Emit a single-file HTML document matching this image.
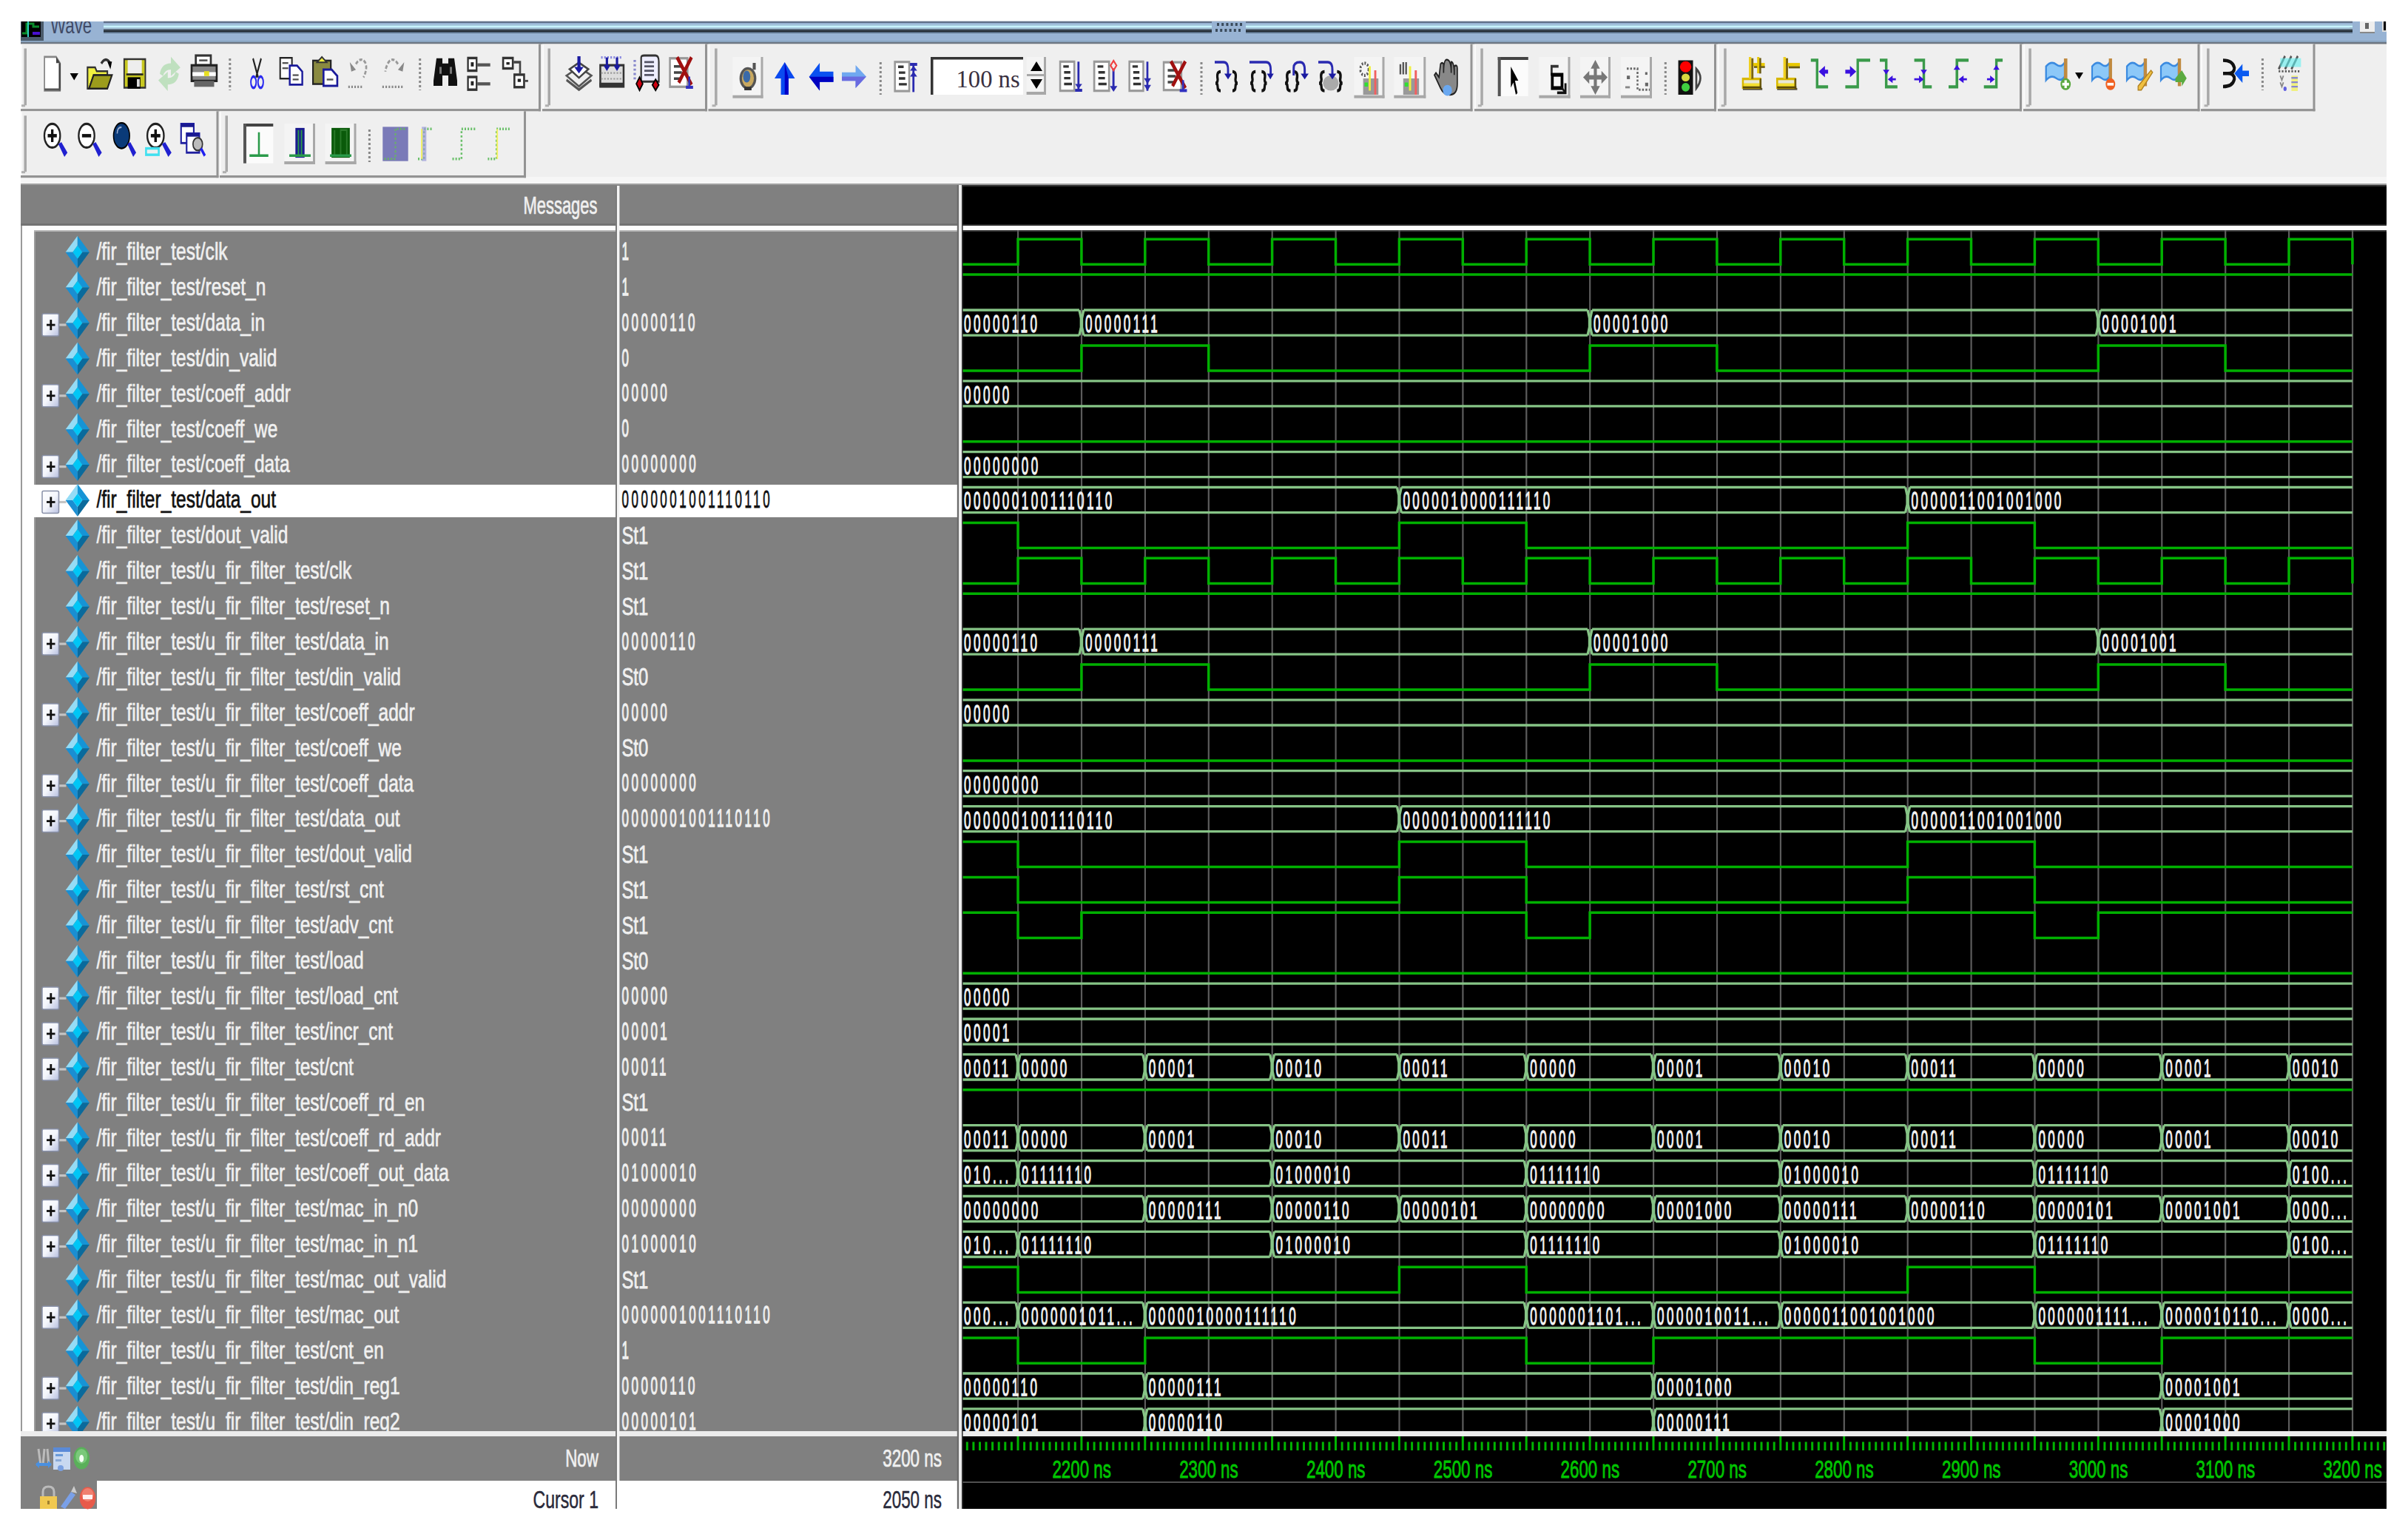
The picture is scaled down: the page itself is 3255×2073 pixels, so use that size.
<!DOCTYPE html><html><head><meta charset="utf-8"><style>
html,body{margin:0;padding:0;background:#fff;}
body{width:3255px;height:2073px;position:relative;overflow:hidden;font-family:"Liberation Sans",sans-serif;}
.a{position:absolute;}
</style></head><body>
<div class="a" style="left:28px;top:29px;width:3198px;height:28px;background:#98b3d3"></div>
<div class="a" style="left:28px;top:57px;width:3198px;height:2px;background:#6c7682"></div>
<div class="a" style="left:28px;top:59px;width:3198px;height:1px;background:#b4b4b4"></div>
<div class="a" style="left:28px;top:60px;width:3198px;height:189px;background:#efefef"></div>
<div class="a" style="left:28px;top:239px;width:3198px;height:8.5px;background:#f6f6f6"></div>
<div class="a" style="left:28px;top:247.5px;width:3198px;height:2.5px;background:#a0a0a0"></div>
<div class="a" style="left:28px;top:250px;width:807px;height:55px;background:#808080"></div>
<div class="a" style="left:28px;top:301.5px;width:807px;height:3px;background:#727272"></div>
<div class="a" style="left:835px;top:250px;width:463px;height:55px;background:#808080"></div>
<div class="a" style="left:835px;top:301.5px;width:463px;height:3px;background:#727272"></div>
<div class="a" style="left:1300px;top:250px;width:1926px;height:55px;background:#000"></div>
<div class="a" style="left:1300px;top:250px;width:1926px;height:2px;background:#333"></div>
<div class="a" style="left:1300px;top:303px;width:1926px;height:2px;background:#2a2a2a"></div>
<div class="a" style="left:28px;top:304.5px;width:3198px;height:6.5px;background:#fdfdfd"></div>
<div class="a" style="left:28px;top:305px;width:2px;height:1629px;background:#9a9a9a"></div>
<div class="a" style="left:30px;top:311px;width:16px;height:1623px;background:#fff"></div>
<div class="a" style="left:46px;top:312px;width:787px;height:1622px;background:#808080"></div>
<div class="a" style="left:46px;top:311px;width:2px;height:1623px;background:#9c9c9c"></div>
<div class="a" style="left:46px;top:311px;width:787px;height:2px;background:#b8b8b8"></div>
<div class="a" style="left:835px;top:311px;width:461px;height:1623px;background:#808080"></div>
<div class="a" style="left:835px;top:311px;width:461px;height:2px;background:#b8b8b8"></div>
<div class="a" style="left:1300px;top:311px;width:1926px;height:1623px;background:#000"></div>
<div class="a" style="left:1300px;top:311px;width:1926px;height:1.5px;background:#3a3a3a"></div>
<div class="a" style="left:28px;top:1934px;width:3198px;height:7px;background:#ececec"></div>
<div class="a" style="left:28px;top:1941px;width:1266px;height:60px;background:#808080"></div>
<div class="a" style="left:28px;top:2001px;width:103px;height:38px;background:#808080"></div>
<div class="a" style="left:131px;top:2001px;width:1163px;height:38px;background:#fff"></div>
<div class="a" style="left:1300px;top:1941px;width:1926px;height:98px;background:#000"></div>
<div class="a" style="left:1300px;top:2002px;width:1926px;height:2px;background:#505050"></div>
<div class="a" style="left:46px;top:655px;width:787px;height:44px;background:#fff"></div>
<div class="a" style="left:837px;top:655px;width:459px;height:44px;background:#fff"></div>
<svg class="a" style="left:0;top:0" width="3255" height="2073">
<defs><clipPath id="wc"><rect x="1300" y="311" width="1926" height="1623"/></clipPath><linearGradient id="pg" x1="0" y1="0" x2="1" y2="1"><stop offset="0" stop-color="#ffffff"/><stop offset="0.5" stop-color="#f4f6fc"/><stop offset="1" stop-color="#b8c0e0"/></linearGradient><clipPath id="tc"><rect x="1300" y="1941" width="1926" height="98"/></clipPath></defs>
<rect x="28" y="59.5" width="701.5" height="90.80000000000001" fill="#efefef"/><rect x="28" y="60.5" width="2" height="87.80000000000001" fill="#fafafa"/><rect x="728.0" y="59.5" width="3" height="90.80000000000001" fill="#939393"/><rect x="28" y="147.10000000000002" width="703.0" height="3.2" fill="#939393"/><rect x="32.5" y="65.5" width="3.5" height="76.80000000000001" fill="#a8a8a8"/><rect x="29" y="141.3" width="5" height="3" fill="#b0b0b0"/><rect x="733" y="59.5" width="221.5" height="90.80000000000001" fill="#efefef"/><rect x="733" y="60.5" width="2" height="87.80000000000001" fill="#fafafa"/><rect x="953.0" y="59.5" width="3" height="90.80000000000001" fill="#939393"/><rect x="733" y="147.10000000000002" width="223.0" height="3.2" fill="#939393"/><rect x="740.5" y="65.5" width="3.5" height="76.80000000000001" fill="#a8a8a8"/><rect x="737" y="141.3" width="5" height="3" fill="#b0b0b0"/><rect x="957.5" y="59.5" width="1031.5" height="90.80000000000001" fill="#efefef"/><rect x="957.5" y="60.5" width="2" height="87.80000000000001" fill="#fafafa"/><rect x="1987.5" y="59.5" width="3" height="90.80000000000001" fill="#939393"/><rect x="957.5" y="147.10000000000002" width="1033.0" height="3.2" fill="#939393"/><rect x="966.1" y="65.5" width="3.5" height="76.80000000000001" fill="#a8a8a8"/><rect x="962.6" y="141.3" width="5" height="3" fill="#b0b0b0"/><rect x="1993" y="59.5" width="325.5" height="90.80000000000001" fill="#efefef"/><rect x="1993" y="60.5" width="2" height="87.80000000000001" fill="#fafafa"/><rect x="2317.0" y="59.5" width="3" height="90.80000000000001" fill="#939393"/><rect x="1993" y="147.10000000000002" width="327.0" height="3.2" fill="#939393"/><rect x="2001.3" y="65.5" width="3.5" height="76.80000000000001" fill="#a8a8a8"/><rect x="1997.8" y="141.3" width="5" height="3" fill="#b0b0b0"/><rect x="2322" y="59.5" width="409.5" height="90.80000000000001" fill="#efefef"/><rect x="2322" y="60.5" width="2" height="87.80000000000001" fill="#fafafa"/><rect x="2730.0" y="59.5" width="3" height="90.80000000000001" fill="#939393"/><rect x="2322" y="147.10000000000002" width="411.0" height="3.2" fill="#939393"/><rect x="2330.2" y="65.5" width="3.5" height="76.80000000000001" fill="#a8a8a8"/><rect x="2326.7" y="141.3" width="5" height="3" fill="#b0b0b0"/><rect x="2735" y="59.5" width="237" height="90.80000000000001" fill="#efefef"/><rect x="2735" y="60.5" width="2" height="87.80000000000001" fill="#fafafa"/><rect x="2970.5" y="59.5" width="3" height="90.80000000000001" fill="#939393"/><rect x="2735" y="147.10000000000002" width="238.5" height="3.2" fill="#939393"/><rect x="2742.3" y="65.5" width="3.5" height="76.80000000000001" fill="#a8a8a8"/><rect x="2738.8" y="141.3" width="5" height="3" fill="#b0b0b0"/><rect x="2975" y="59.5" width="153" height="90.80000000000001" fill="#efefef"/><rect x="2975" y="60.5" width="2" height="87.80000000000001" fill="#fafafa"/><rect x="3126.5" y="59.5" width="3" height="90.80000000000001" fill="#939393"/><rect x="2975" y="147.10000000000002" width="154.5" height="3.2" fill="#939393"/><rect x="2983.1" y="65.5" width="3.5" height="76.80000000000001" fill="#a8a8a8"/><rect x="2979.6" y="141.3" width="5" height="3" fill="#b0b0b0"/><rect x="28" y="150.3" width="266" height="89.89999999999998" fill="#efefef"/><rect x="28" y="151.3" width="2" height="86.89999999999998" fill="#fafafa"/><rect x="292.5" y="150.3" width="3" height="89.89999999999998" fill="#939393"/><rect x="28" y="237.0" width="267.5" height="3.2" fill="#939393"/><rect x="32.5" y="156.3" width="3.5" height="75.89999999999998" fill="#a8a8a8"/><rect x="29" y="231.2" width="5" height="3" fill="#b0b0b0"/><rect x="297" y="150.3" width="412.5" height="89.89999999999998" fill="#efefef"/><rect x="297" y="151.3" width="2" height="86.89999999999998" fill="#fafafa"/><rect x="708.0" y="150.3" width="3" height="89.89999999999998" fill="#939393"/><rect x="297" y="237.0" width="414.0" height="3.2" fill="#939393"/><rect x="304.5" y="156.3" width="3.5" height="75.89999999999998" fill="#a8a8a8"/><rect x="301" y="231.2" width="5" height="3" fill="#b0b0b0"/>
<g transform="translate(56.6,76.8) scale(1.756,2.844)"><path d="M2,0 H11 L14,3 V16 H2 Z" fill="#fff" stroke="#888" stroke-width="1"/><path d="M11,0 L14,3 H11 Z" fill="#444"/><rect x="13" y="3" width="1.5" height="13" fill="#444"/><rect x="2" y="15" width="12.5" height="1" fill="#555"/></g><g transform="translate(94.6,99.0) scale(0.706,0.600)"><path d="M0,0 H16 L8,16 Z" fill="#000"/></g><g transform="translate(118.3,78.0) scale(2.063,2.612)"><path d="M0,5 H5 L6,7 H13 V9 H4 L1,16 H0 Z" fill="#f0f040" stroke="#333" stroke-width="1"/><path d="M1,16 L4,9 H16 L13,16 Z" fill="#9c9c1c" stroke="#222" stroke-width="1"/><path d="M9,3 Q12,-1 15,3" fill="none" stroke="#333" stroke-width="1.5"/><path d="M13,2 L16,2 L15,6 Z" fill="#000"/></g><g transform="translate(166.9,78.7) scale(1.906,2.569)"><rect x="0" y="0" width="16" height="16" fill="#333"/><rect x="1" y="1" width="14" height="14" fill="#c8c820"/><rect x="3" y="1" width="10" height="7" fill="#eee"/><rect x="2" y="8" width="12" height="1" fill="#222"/><rect x="3" y="10" width="9" height="6" fill="#000"/><rect x="9.5" y="11" width="2" height="4" fill="#ddd"/></g><g transform="translate(211.8,76.8) scale(2.137,2.881)"><path d="M2,8 Q3,3 9,3 V0 L15,5 L9,9 V6 Q5,6 4,9 Z" fill="#bfe0bf"/><path d="M14,8 Q13,13 7,13 V16 L1,11 L7,7 V10 Q11,10 12,7 Z" fill="#bfe0bf"/></g><g transform="translate(257.9,75.0) scale(2.256,2.644)"><rect x="3" y="0" width="9" height="5" fill="#fff" stroke="#333" stroke-width="1.2"/><rect x="5" y="2" width="5" height="1" fill="#555"/><rect x="0.5" y="5" width="15" height="8" fill="#888" stroke="#222" stroke-width="1.2"/><rect x="1" y="8.5" width="14" height="2" fill="#fff"/><rect x="8" y="8" width="3" height="2.5" fill="#e8e020"/><rect x="2" y="13" width="12" height="3" fill="#666"/></g><line x1="310.8" y1="79" x2="310.8" y2="122" stroke="#888" stroke-width="3" stroke-dasharray="3,3"/><g transform="translate(336.5,79.0) scale(1.375,2.562)"><path d="M4,0 L9,10 M12,0 L7,10" fill="none" stroke="#222" stroke-width="1.5"/><ellipse cx="4.5" cy="12.5" rx="2.6" ry="3" fill="none" stroke="#2a2af0" stroke-width="1.4"/><ellipse cx="11.5" cy="12.5" rx="2.6" ry="3" fill="none" stroke="#2a2af0" stroke-width="1.4"/></g><g transform="translate(377.7,77.0) scale(1.994,2.338)"><rect x="0.5" y="0.5" width="8" height="12" fill="#fff" stroke="#222" stroke-width="1"/><rect x="2" y="3" width="4" height="1" fill="#555"/><rect x="2" y="6" width="4" height="1" fill="#555"/><path d="M7,5 H12 L15.5,8.5 V16 H7 Z" fill="#fff" stroke="#1a1a9a" stroke-width="1.2"/><rect x="9" y="10" width="4" height="1" fill="#555"/><rect x="9" y="12.5" width="4" height="1" fill="#555"/></g><g transform="translate(422.0,77.0) scale(2.188,2.438)"><rect x="0.5" y="2" width="11" height="13" fill="#8a8a40" stroke="#222" stroke-width="1"/><path d="M3,3 L6,0 L9,3 Z" fill="#f0f040" stroke="#333" stroke-width="0.8"/><path d="M7,7 H12 L15.5,10.5 V16 H7 Z" fill="#fff" stroke="#1a1a9a" stroke-width="1.2"/><rect x="9" y="12" width="4" height="1" fill="#555"/></g><g transform="translate(470.8,78.8) scale(2.056,2.575)"><path d="M5,3 Q8,-1 11,2 Q13,5 10,10" fill="none" stroke="#999" stroke-width="1.3" stroke-dasharray="2,1"/><path d="M1,2 L5,6 L2,7 Z" fill="#888"/><path d="M0,15 H10" fill="none" stroke="#888" stroke-width="1.3" stroke-dasharray="1,1"/></g><g transform="translate(514.7,78.8) scale(2.112,2.575)"><path d="M11,3 Q8,-1 5,2 Q3,5 3,7" fill="none" stroke="#999" stroke-width="1.3" stroke-dasharray="2,1"/><path d="M15,2 L11,6 L14,7 Z" fill="#888"/><path d="M1,15 H15" fill="none" stroke="#888" stroke-width="1.3" stroke-dasharray="1,1"/></g><line x1="567.7" y1="79" x2="567.7" y2="122" stroke="#888" stroke-width="3" stroke-dasharray="3,3"/><g transform="translate(586.0,78.8) scale(2.000,2.325)"><path d="M2,0 H6 V3 H10 V0 H14 L16,13 V16 H10 V10 H6 V16 H0 V13 Z" fill="#111"/><rect x="4" y="5" width="1.5" height="4" fill="#777"/><rect x="11" y="5" width="1.5" height="4" fill="#777"/></g><g transform="translate(631.6,77.0) scale(1.944,2.850)"><rect x="0.5" y="0.5" width="6" height="6" fill="#fff" stroke="#333" stroke-width="1.2"/><rect x="2.5" y="2.5" width="2" height="2" fill="#222"/><rect x="7" y="3" width="9" height="1.5" fill="#555"/><rect x="0.5" y="9.5" width="6" height="6" fill="#fff" stroke="#333" stroke-width="1.2"/><rect x="2.5" y="11.5" width="2" height="2" fill="#222"/><rect x="7" y="12" width="9" height="1.5" fill="#555"/></g><g transform="translate(679.0,77.0) scale(2.181,2.812)"><rect x="0.5" y="0.5" width="6" height="5" fill="#fff" stroke="#333" stroke-width="1.2"/><rect x="2.5" y="2.5" width="2" height="1.2" fill="#222"/><path d="M7,2.5 H11 V8" fill="none" stroke="#444" stroke-width="1.2"/><rect x="7.5" y="8.5" width="6" height="6" fill="#fff" stroke="#333" stroke-width="1.2"/><rect x="9.5" y="10.5" width="2" height="1.5" fill="#222"/><rect x="14" y="11" width="2" height="1" fill="#444"/></g><g transform="translate(765.7,76.0) scale(2.112,2.912)"><path d="M0,9 L8,5 L16,9 L8,14 Z" fill="#eee" stroke="#555" stroke-width="1"/><path d="M0,11 L8,15.5 L16,11" fill="none" stroke="#555" stroke-width="1.2"/><path d="M2,6 L8,3 L14,6 L8,10 Z" fill="#fff" stroke="#444" stroke-width="1"/><rect x="7" y="0" width="2" height="6" fill="#1a1aa0"/><path d="M5,5 H11 L8,8 Z" fill="#1a1aa0"/></g><g transform="translate(810.4,75.0) scale(2.100,2.625)"><rect x="0.5" y="5" width="15" height="11" fill="#ddd" stroke="#333" stroke-width="1.2"/><path d="M1,9 H15 M1,12 H15" fill="none" stroke="#999" stroke-width="0.8" stroke-dasharray="1,1"/><path d="M1,1 H15" fill="none" stroke="#8888e0" stroke-width="1.2" stroke-dasharray="1,1"/><rect x="4" y="1" width="1.5" height="5" fill="#1a1aa0"/><path d="M2.5,5 H7 L4.75,8 Z" fill="#1a1aa0"/><rect x="10.5" y="1" width="1.5" height="5" fill="#1a1aa0"/><path d="M9,5 H13.5 L11.25,8 Z" fill="#1a1aa0"/><rect x="0" y="14" width="16" height="2" fill="#333"/></g><g transform="translate(858.0,75.0) scale(2.169,2.938)"><path d="M4,1 Q4,0 6,0 H13 Q15,0 15,3 V12 H4 Z" fill="#eef" stroke="#333" stroke-width="1"/><path d="M6,3 H12 M6,5 H12 M6,7 H12 M6,9 H12" fill="none" stroke="#556" stroke-width="0.9"/><path d="M0,2 V12" fill="none" stroke="#88c" stroke-width="1.5" stroke-dasharray="1,1"/><path d="M3,10 L5,13 L3,16 L1,13 Z" fill="#d00010" stroke="#000" stroke-width="0.8"/><path d="M13,11 L15,13.5 L13,16 L11,13.5 Z" fill="#d00010" stroke="#000" stroke-width="0.8"/></g><g transform="translate(904.5,76.0) scale(2.156,2.750)"><rect x="0.5" y="1" width="11" height="14" fill="#fff" stroke="#999" stroke-width="1.2"/><path d="M3,5 H8 M3,8 H8 M3,11 H8" fill="none" stroke="#444" stroke-width="1.3"/><path d="M5,0.5 L14,14 M14,0.5 L6,13" fill="none" stroke="#a01010" stroke-width="2"/><rect x="12" y="10" width="1.2" height="5" fill="#3030c0"/><rect x="10.5" y="14.5" width="4.5" height="1.5" fill="#3030c0"/></g><rect x="990.4" y="77" width="41.10000000000002" height="55.69999999999999" fill="#f4f4f4"/><rect x="1028.5" y="77" width="3" height="55.69999999999999" fill="#a8a8a8"/><rect x="990.4" y="128.7" width="41.10000000000002" height="4" fill="#a8a8a8"/><g transform="translate(998.0,85.0) scale(1.625,2.312)"><ellipse cx="8" cy="9" rx="7" ry="6.5" fill="#555"/><ellipse cx="8" cy="9" rx="5" ry="5" fill="#c8a860"/><ellipse cx="7" cy="8" rx="3" ry="3.5" fill="#3a6aa8"/><rect x="12" y="0" width="2.5" height="4" fill="#555"/><rect x="5" y="14" width="6" height="2" fill="#333"/></g><g transform="translate(1047.0,84.0) scale(1.719,2.750)"><path d="M8,0 L16,8 H11 V16 H5 V8 H0 Z" fill="#0a4af0"/><path d="M8,0 L11,8 V16 H8 Z" fill="#0000c8"/></g><g transform="translate(1093.7,85.0) scale(2.050,2.350)"><path d="M0,8 L7,0 V5 H16 V11 H7 V16 Z" fill="#0a50f0"/><path d="M0,8 H16 V11 H7 V16 Z" fill="#0000c0"/></g><g transform="translate(1138.0,88.0) scale(2.062,1.938)"><path d="M16,8 L9,0 V5 H0 V11 H9 V16 Z" fill="#70a8f0"/><path d="M16,8 H0 V11 H9 V16 Z" fill="#6a6ae0"/></g><line x1="1190.3" y1="84" x2="1190.3" y2="128" stroke="#888" stroke-width="3" stroke-dasharray="3,3"/><g transform="translate(1208.6,82.4) scale(2.150,2.625)"><rect x="0.5" y="0.5" width="9" height="15" fill="#fff" stroke="#999" stroke-width="1.2"/><path d="M2.5,3 H6 M3,6 H7 M3,9 H7 M3,12 H8" fill="none" stroke="#333" stroke-width="1.3"/><rect x="11.5" y="2" width="1.3" height="14" fill="#2a2ab0"/><rect x="10" y="1" width="4.5" height="1.5" fill="#2a2ab0"/><path d="M10,5 H14.5 L12.2,2.5 Z" fill="#2a2ab0"/><path d="M10,8 H14.5 L12.2,5.5 Z" fill="#2a2ab0"/></g><rect x="1258" y="77" width="125" height="51" fill="#fff"/><rect x="1258" y="77" width="125" height="3.5" fill="#333"/><rect x="1258" y="77" width="3.5" height="51" fill="#333"/><text transform="translate(1292.5,117.5) scale(0.96,1)" font-family="Liberation Serif" font-size="34" fill="#3a3040" >100 ns</text><rect x="1387.6" y="77" width="26.40000000000009" height="51" fill="#f4f4f4"/><rect x="1411" y="77" width="3" height="51" fill="#a8a8a8"/><rect x="1387.6" y="124" width="26.40000000000009" height="4" fill="#a8a8a8"/><path d="M1393,96 L1401,83 L1409,96 Z" fill="#000"/><path d="M1393,107 L1401,120 L1409,107 Z" fill="#000"/><rect x="1388" y="100" width="25" height="3" fill="#a8a8a8"/><g transform="translate(1432.0,82.0) scale(2.125,2.625)"><rect x="0.5" y="0.5" width="9" height="15" fill="#fff" stroke="#999" stroke-width="1.2"/><path d="M2.5,3 H6 M3,6 H7 M3,9 H7 M3,12 H8" fill="none" stroke="#333" stroke-width="1.3"/><rect x="11.5" y="0.5" width="1.3" height="15" fill="#2a2ab0"/><rect x="10" y="14.5" width="4.5" height="1.5" fill="#2a2ab0"/><path d="M10,12 H14.5 L12.2,14.5 Z" fill="#2a2ab0"/></g><g transform="translate(1478.0,82.0) scale(2.231,2.625)"><rect x="0.5" y="0.5" width="9" height="15" fill="#fff" stroke="#999" stroke-width="1.2"/><path d="M2.5,3 H6 M3,6 H7 M3,9 H7 M3,12 H8" fill="none" stroke="#333" stroke-width="1.3"/><rect x="11.5" y="4" width="1.3" height="11" fill="#2a2ab0"/><path d="M12.2,0 L14,2.5 L12.2,5 L10.4,2.5 Z" fill="none" stroke="#f04040" stroke-width="0.9"/><path d="M10,13 H14.5 L12.2,16 Z" fill="#2a2ab0"/></g><g transform="translate(1525.6,82.0) scale(2.088,2.625)"><rect x="0.5" y="0.5" width="9" height="15" fill="#fff" stroke="#999" stroke-width="1.2"/><path d="M2.5,3 H6 M3,6 H7 M3,9 H7 M3,12 H8" fill="none" stroke="#333" stroke-width="1.3"/><rect x="11.5" y="0.5" width="1.3" height="15" fill="#2a2ab0"/><path d="M10,9 H14.5 L12.2,12 Z" fill="#2a2ab0"/><path d="M10,12.5 H14.5 L12.2,15.5 Z" fill="#2a2ab0"/></g><g transform="translate(1572.0,81.5) scale(2.162,2.681)"><rect x="0.5" y="1" width="11" height="14" fill="#fff" stroke="#999" stroke-width="1.2"/><path d="M3,5 H8 M3,8 H8 M3,11 H8" fill="none" stroke="#444" stroke-width="1.3"/><path d="M5,0.5 L14,14 M14,0.5 L6,13" fill="none" stroke="#a01010" stroke-width="2"/><rect x="12" y="10" width="1.2" height="5" fill="#3030c0"/><rect x="10.5" y="14.5" width="4.5" height="1.5" fill="#3030c0"/></g><line x1="1624" y1="84" x2="1624" y2="128" stroke="#888" stroke-width="3" stroke-dasharray="3,3"/><g transform="translate(1642.0,81.5) scale(2.000,2.569)"><path d="M4,6 Q1,6 2,10 Q2,12 0.5,12 Q2,12 2,14 Q2,16 4,16" fill="none" stroke="#111" stroke-width="1.6"/><path d="M12,6 Q15,6 14,10 Q14,12 15.5,12 Q14,12 14,14 Q14,16 12,16" fill="none" stroke="#111" stroke-width="1.6"/><path d="M0,1 H6 Q9,1 9,5 V8" fill="none" stroke="#2a2ab0" stroke-width="1.4"/><path d="M6.5,7 H11.5 L9,10 Z" fill="#1a1aa0"/></g><g transform="translate(1689.0,81.5) scale(2.044,2.569)"><path d="M4,6 Q1,6 2,10 Q2,12 0.5,12 Q2,12 2,14 Q2,16 4,16" fill="none" stroke="#111" stroke-width="1.6"/><path d="M8,6 Q11,6 10,10 Q10,12 11.5,12 Q10,12 10,14 Q10,16 8,16" fill="none" stroke="#111" stroke-width="1.6"/><path d="M0,1 H11 Q14,1 14,5 V8" fill="none" stroke="#2a2ab0" stroke-width="1.4"/><path d="M11.5,7 H16 L13.8,10 Z" fill="#1a1aa0"/></g><g transform="translate(1736.0,81.5) scale(2.125,2.569)"><path d="M4,6 Q1,6 2,10 Q2,12 0.5,12 Q2,12 2,14 Q2,16 4,16" fill="none" stroke="#111" stroke-width="1.6"/><path d="M6,6 Q9,6 8,10 Q8,12 9.5,12 Q8,12 8,14 Q8,16 6,16" fill="none" stroke="#111" stroke-width="1.6"/><path d="M6,8 V4 Q6,1 10,1 Q13,1 13,5 V8" fill="none" stroke="#2a2ab0" stroke-width="1.4"/><path d="M10.5,7 H15.5 L13,10 Z" fill="#1a1aa0"/></g><g transform="translate(1782.0,81.5) scale(2.112,2.569)"><ellipse cx="8" cy="12" rx="5" ry="4" fill="#aaa"/><path d="M4,6 Q1,6 2,10 Q2,12 0.5,12 Q2,12 2,14 Q2,16 4,16" fill="none" stroke="#111" stroke-width="1.6"/><path d="M12,6 Q15,6 14,10 Q14,12 15.5,12 Q14,12 14,14 Q14,16 12,16" fill="none" stroke="#111" stroke-width="1.6"/><path d="M0,1 H6 Q9,1 9,5 V8" fill="none" stroke="#2a2ab0" stroke-width="1.4"/><path d="M6.5,7 H11.5 L9,10 Z" fill="#1a1aa0"/></g><rect x="1830.4" y="77" width="41.09999999999991" height="55.69999999999999" fill="#f4f4f4"/><rect x="1868.5" y="77" width="3" height="55.69999999999999" fill="#a8a8a8"/><rect x="1830.4" y="128.7" width="41.09999999999991" height="4" fill="#a8a8a8"/><g transform="translate(1837.0,84.0) scale(1.875,2.750)"><circle cx="4" cy="3.5" r="3" fill="none" stroke="#555" stroke-width="1.5" stroke-dasharray="1,1"/><rect x="3" y="8" width="11" height="8" fill="#999"/><rect x="7" y="2" width="1.5" height="12" fill="#f0f040"/><rect x="11" y="4" width="1.5" height="12" fill="#f06060"/><rect x="4" y="10" width="2.5" height="2" fill="#30e030"/></g><rect x="1884.3" y="77" width="43.0" height="55.69999999999999" fill="#f4f4f4"/><rect x="1924.3" y="77" width="3" height="55.69999999999999" fill="#a8a8a8"/><rect x="1884.3" y="128.7" width="43.0" height="4" fill="#a8a8a8"/><g transform="translate(1891.0,84.0) scale(1.938,2.750)"><path d="M1,1 V6 M3,0 V6 M5,0 V6" fill="none" stroke="#555" stroke-width="1.2"/><rect x="3" y="8" width="11" height="8" fill="#999"/><rect x="7" y="2" width="1.5" height="12" fill="#f0f040"/><rect x="11" y="4" width="1.5" height="12" fill="#f06060"/><rect x="4" y="10" width="2.5" height="2" fill="#30e030"/></g><g transform="translate(1939.0,80.6) scale(2.062,2.963)"><path d="M3,8 L1,6 L0,7 L4,13 Q6,16 10,16 Q15,16 15,11 V4 Q15,2 13,3 V7 Q13,1 11,1 V6 Q11,0 8,0 Q6,0 6,6 V2 Q5,1 4,2 Z" fill="#888" stroke="#222" stroke-width="0.8"/><ellipse cx="8.5" cy="14" rx="3" ry="2.5" fill="#6aa8f0"/></g><rect x="2024.7" y="77" width="41.100000000000136" height="53" fill="#fbfbfb"/><rect x="2024.7" y="77" width="41.100000000000136" height="4" fill="#444"/><rect x="2024.7" y="77" width="4" height="53" fill="#555"/><g transform="translate(2040.0,90.0) scale(1.125,2.375)"><path d="M2,0 L2,12 L5,9 L8,16 L10,15 L7,8 L11,8 Z" fill="#000"/></g><rect x="2080.4" y="77" width="42.09999999999991" height="55.69999999999999" fill="#f4f4f4"/><rect x="2119.5" y="77" width="3" height="55.69999999999999" fill="#a8a8a8"/><rect x="2080.4" y="128.7" width="42.09999999999991" height="4" fill="#a8a8a8"/><g transform="translate(2088.0,87.0) scale(1.875,2.562)"><path d="M5,6 V1 H10" fill="none" stroke="#333" stroke-width="1.5"/><rect x="5.5" y="5.5" width="7" height="7" fill="none" stroke="#000" stroke-width="2"/><path d="M9,15 H15 V10" fill="none" stroke="#111" stroke-width="1.5"/><path d="M12,12 L15,15" fill="none" stroke="#111" stroke-width="1.2"/></g><rect x="2136" y="77" width="41" height="55.69999999999999" fill="#f4f4f4"/><rect x="2174" y="77" width="3" height="55.69999999999999" fill="#a8a8a8"/><rect x="2136" y="128.7" width="41" height="4" fill="#a8a8a8"/><g transform="translate(2140.0,81.0) scale(2.062,2.938)"><path d="M8,0 L11,4 H9 V7 H12 V5 L16,8 L12,11 V9 H9 V12 H11 L8,16 L5,12 H7 V9 H4 V11 L0,8 L4,5 V7 H7 V4 H5 Z" fill="#777"/></g><rect x="2191" y="77" width="42" height="55.69999999999999" fill="#f4f4f4"/><rect x="2230" y="77" width="3" height="55.69999999999999" fill="#a8a8a8"/><rect x="2191" y="128.7" width="42" height="4" fill="#a8a8a8"/><g transform="translate(2197.0,88.0) scale(2.062,2.375)"><path d="M1,2 H8 V14 H16" fill="none" stroke="#666" stroke-width="1.2" stroke-dasharray="1.2,1"/><rect x="1" y="6" width="2" height="2" fill="#666"/><rect x="13" y="4" width="1.5" height="1.5" fill="#666"/><rect x="13" y="10" width="2" height="2" fill="#666"/><rect x="0" y="12" width="3" height="1.2" fill="#888"/></g><line x1="2251.3" y1="84" x2="2251.3" y2="128" stroke="#888" stroke-width="3" stroke-dasharray="3,3"/><g transform="translate(2268.6,81.5) scale(2.213,2.906)"><rect x="0" y="0" width="9" height="16" fill="#111"/><ellipse cx="4.5" cy="3" rx="3.5" ry="2.6" fill="#f00"/><ellipse cx="4.5" cy="8" rx="2.5" ry="1.8" fill="#d8d840"/><ellipse cx="4.5" cy="12.5" rx="2.5" ry="2" fill="#40d040"/><path d="M11,4 Q16,8 11,13 Z" fill="none" stroke="#444" stroke-width="1.2"/></g><g transform="translate(2354.7,77.0) scale(1.938,2.794)"><rect x="0.6" y="15" width="13.6" height="1" fill="#55503a"/><rect x="0" y="10" width="13.4" height="5.4" fill="#d8b800"/><rect x="1.3" y="11.2" width="10.8" height="1.6" fill="#e8e8d8"/><rect x="1.3" y="12.8" width="10.8" height="1.6" fill="#f4e030"/><rect x="12.4" y="10.4" width="1.2" height="5" fill="#6a5a10"/><rect x="0.6" y="14.2" width="13" height="1" fill="#5a4a08"/><rect x="4.8" y="0" width="1.7" height="10.5" fill="#f0d020"/><rect x="6.5" y="0.6" width="1.5" height="10" fill="#7a6510"/><rect x="7.9" y="2.9" width="8" height="1.6" fill="#e8c800"/><rect x="8.4" y="4.4" width="7.6" height="0.9" fill="#6a5a10"/><rect x="10.6" y="0" width="1.5" height="7.9" fill="#e8c800"/><rect x="12.1" y="0.5" width="1.3" height="7.5" fill="#6a5a10"/></g><g transform="translate(2401.0,77.0) scale(2.000,2.794)"><rect x="0.6" y="15" width="13.6" height="1" fill="#55503a"/><rect x="0" y="10" width="13.4" height="5.4" fill="#d8b800"/><rect x="1.3" y="11.2" width="10.8" height="1.6" fill="#e8e8d8"/><rect x="1.3" y="12.8" width="10.8" height="1.6" fill="#f4e030"/><rect x="12.4" y="10.4" width="1.2" height="5" fill="#6a5a10"/><rect x="0.6" y="14.2" width="13" height="1" fill="#5a4a08"/><rect x="4.8" y="0" width="1.7" height="10.5" fill="#f0d020"/><rect x="6.5" y="0.6" width="1.5" height="10" fill="#7a6510"/><rect x="7.9" y="2.9" width="8.1" height="1.7" fill="#e8c800"/><rect x="8.4" y="4.5" width="7.6" height="1" fill="#6a5a10"/></g><g transform="translate(2447.8,78.8) scale(2.119,2.575)"><path d="M0,1 H4 V15 H11" fill="none" stroke="#3a9a4a" stroke-width="1.6"/><path d="M5,7 L9,4 V6 H11 V8 H9 V10 Z" fill="#3a10e0"/></g><g transform="translate(2494.4,78.8) scale(2.100,2.575)"><path d="M0,15 H8 V1 H16" fill="none" stroke="#3a9a4a" stroke-width="1.6"/><path d="M7,7 L3,4 V6 H0 V8 H3 V10 Z" fill="#3a10e0"/></g><g transform="translate(2541.0,78.8) scale(2.169,2.575)"><path d="M0,1 H4 V15 H11" fill="none" stroke="#3a9a4a" stroke-width="1.6"/><path d="M2,6 H6 L4,8.5 Z" fill="#3a10e0"/><path d="M5,11 L8,9 V10.5 H10 V11.5 H8 V13 Z" fill="#3a10e0"/></g><g transform="translate(2587.6,78.8) scale(2.150,2.575)"><path d="M0,1 H6 V15 H11" fill="none" stroke="#3a9a4a" stroke-width="1.6"/><path d="M4,6 H8 L6,8.5 Z" fill="#3a10e0"/><path d="M6,11 L3,9 V10.5 H0 V11.5 H3 V13 Z" fill="#3a10e0"/></g><g transform="translate(2634.0,78.8) scale(2.250,2.575)"><path d="M0,15 H5 V1 H12" fill="none" stroke="#3a9a4a" stroke-width="1.6"/><path d="M3,6 H7 L5,3.5 Z" fill="#3a10e0"/><path d="M6,11 L9,9 V10.5 H11 V11.5 H9 V13 Z" fill="#3a10e0"/></g><g transform="translate(2681.7,78.8) scale(2.113,2.575)"><path d="M0,15 H8 V1 H12" fill="none" stroke="#3a9a4a" stroke-width="1.6"/><path d="M6,6 H10 L8,3.5 Z" fill="#3a10e0"/><path d="M7,11 L4,9 V10.5 H2 V11.5 H4 V13 Z" fill="#3a10e0"/></g><g transform="translate(2765.7,79.0) scale(2.306,2.675)"><path d="M0,4 Q3,1 6,3 Q9,5 11,2 V9 Q9,12 6,10 Q3,8 0,11 Z" fill="#8cc8f8" stroke="#3a8ae0" stroke-width="1"/><rect x="10.5" y="0" width="2" height="14" fill="#c08a40"/><ellipse cx="11.5" cy="13" rx="3" ry="3" fill="#5aa840"/><rect x="10.8" y="11" width="1.4" height="4" fill="#fff"/><rect x="9.5" y="12.3" width="4" height="1.4" fill="#fff"/></g><g transform="translate(2805.0,98.0) scale(0.688,0.562)"><path d="M0,0 H16 L8,16 Z" fill="#000"/></g><g transform="translate(2828.0,79.0) scale(2.156,2.675)"><path d="M0,4 Q3,1 6,3 Q9,5 11,2 V9 Q9,12 6,10 Q3,8 0,11 Z" fill="#8cc8f8" stroke="#3a8ae0" stroke-width="1"/><rect x="10.5" y="0" width="2" height="14" fill="#c08a40"/><ellipse cx="11.5" cy="13" rx="3" ry="3" fill="#f06020"/><rect x="9.5" y="12.3" width="4" height="1.4" fill="#fff"/></g><g transform="translate(2875.0,79.0) scale(2.169,2.675)"><path d="M0,4 Q3,1 6,3 Q9,5 11,2 V9 Q9,12 6,10 Q3,8 0,11 Z" fill="#8cc8f8" stroke="#3a8ae0" stroke-width="1"/><rect x="10.5" y="0" width="2" height="14" fill="#c08a40"/><path d="M15,6 L16,7 L9,16 L7,16 L7,14 Z" fill="#f0c040" stroke="#b08020" stroke-width="0.6"/></g><g transform="translate(2921.0,79.0) scale(2.175,2.675)"><path d="M0,4 Q3,1 6,3 Q9,5 11,2 V9 Q9,12 6,10 Q3,8 0,11 Z" fill="#8cc8f8" stroke="#3a8ae0" stroke-width="1"/><rect x="10.5" y="0" width="2" height="14" fill="#c08a40"/><path d="M9,10 L13,6 L16,10 L13,14 V12 H9 Z" fill="#5aaa40"/></g><g transform="translate(3005.0,79.0) scale(2.188,2.531)"><path d="M0,1 Q6,1 7,5 Q7,8 3,8 H0 M3,8 Q7,8 7,11 Q6,15 0,15" fill="none" stroke="#111" stroke-width="1.8"/><path d="M7,8 L12,3 V6.5 H16 V9.5 H12 V13 Z" fill="#0a5af0"/></g><line x1="3058.4" y1="79" x2="3058.4" y2="122" stroke="#888" stroke-width="3" stroke-dasharray="3,3"/><g transform="translate(3078.0,75.7) scale(2.156,2.956)"><path d="M1,6 L5,0 M5,6 L9,0 M9,6 L13,0" fill="none" stroke="#555" stroke-width="1.2"/><rect x="2" y="1" width="13" height="4" fill="#60f0f0" opacity="0.6"/><path d="M1,7 H15" fill="none" stroke="#555" stroke-width="1" stroke-dasharray="1,1"/><path d="M2,9 L3,11 L4,9 M2,12 L3,14 L4,12" fill="none" stroke="#888" stroke-width="0.8"/><rect x="9" y="9" width="4" height="7" fill="#f0f080"/><path d="M9,10 H13 M9,12 H13 M9,14 H13" fill="none" stroke="#8888d0" stroke-width="0.8"/><circle cx="5" cy="15" r="1" fill="#6060e0"/></g><g transform="translate(58.3,166.2) scale(2.056,2.863)"><ellipse cx="6" cy="6" rx="5.2" ry="5.6" fill="#fff" stroke="#222" stroke-width="1.1"/><path d="M10,10 L12,9 L16,14 L14,16 Z" fill="#2020d0"/><rect x="3" y="5.2" width="6" height="1.6" fill="#111"/><rect x="5.2" y="3" width="1.6" height="6" fill="#111"/></g><g transform="translate(104.7,166.2) scale(2.056,2.863)"><ellipse cx="6" cy="6" rx="5.2" ry="5.6" fill="#fff" stroke="#222" stroke-width="1.1"/><path d="M10,10 L12,9 L16,14 L14,16 Z" fill="#2020d0"/><rect x="3" y="5.2" width="6" height="1.6" fill="#111"/></g><g transform="translate(152.5,166.2) scale(1.969,2.863)"><ellipse cx="6" cy="6" rx="5.5" ry="6" fill="#0a3a78" stroke="#000" stroke-width="0.8"/><path d="M3,5 Q3,2 6,2" fill="none" stroke="#9ac" stroke-width="0.8"/><path d="M10,10 L12,9 L16,14 L14,16 Z" fill="#2020d0"/></g><g transform="translate(197.4,166.2) scale(2.150,2.863)"><ellipse cx="6" cy="6" rx="5.2" ry="5.6" fill="#fff" stroke="#222" stroke-width="1.1"/><path d="M10,10 L12,9 L16,14 L14,16 Z" fill="#2020d0"/><rect x="3" y="5.2" width="6" height="1.6" fill="#111"/><rect x="5.2" y="3" width="1.6" height="6" fill="#111"/><rect x="0" y="12" width="8" height="3" fill="none" stroke="#40e0f0" stroke-width="1.2"/></g><g transform="translate(243.7,166.0) scale(2.144,2.875)"><rect x="0.5" y="0.5" width="8" height="9" fill="#fff" stroke="#2020a0" stroke-width="1"/><rect x="0.5" y="0.5" width="8" height="1.5" fill="#1a1a90"/><rect x="4" y="5" width="8" height="9" fill="#fff" stroke="#2020a0" stroke-width="1"/><rect x="4" y="5" width="8" height="1.5" fill="#1a1a90"/><ellipse cx="11" cy="10" rx="3" ry="3" fill="#bbb" stroke="#333" stroke-width="0.8"/><path d="M13,12 L15.5,15.5" fill="none" stroke="#2020f0" stroke-width="1.5"/></g><rect x="329" y="167" width="40.30000000000001" height="53.69999999999999" fill="#fbfbfb"/><rect x="329" y="167" width="40.30000000000001" height="4" fill="#444"/><rect x="329" y="167" width="4" height="53.69999999999999" fill="#555"/><g transform="translate(333.0,170.0) scale(2.125,2.875)"><path d="M8,3 V14 M2,14 H14" fill="none" stroke="#2a9a4a" stroke-width="1.2"/></g><rect x="384.3" y="167" width="41.69999999999999" height="55" fill="#f4f4f4"/><rect x="423" y="167" width="3" height="55" fill="#a8a8a8"/><rect x="384.3" y="218" width="41.69999999999999" height="4" fill="#a8a8a8"/><g transform="translate(389.0,170.0) scale(2.062,2.875)"><rect x="5" y="1" width="6" height="14" fill="#1a1a90"/><path d="M7,2 V14 H9 V2" fill="none" stroke="#2a9a4a" stroke-width="0.9"/><path d="M1,14 H15" fill="none" stroke="#2a9a4a" stroke-width="1.2"/></g><rect x="439.6" y="167" width="41.89999999999998" height="55" fill="#f4f4f4"/><rect x="478.5" y="167" width="3" height="55" fill="#a8a8a8"/><rect x="439.6" y="218" width="41.89999999999998" height="4" fill="#a8a8a8"/><g transform="translate(444.0,170.0) scale(2.062,2.875)"><rect x="2" y="1" width="12" height="14" fill="#0a5a0a"/><path d="M4,2 V14 H8 V2 H12 V14" fill="none" stroke="#2a7a2a" stroke-width="0.9"/><path d="M1,14 H15" fill="none" stroke="#2a9a4a" stroke-width="1.2"/></g><line x1="499.4" y1="175" x2="499.4" y2="219" stroke="#888" stroke-width="3" stroke-dasharray="3,3"/><g transform="translate(517.3,171.4) scale(2.150,2.894)"><rect x="0" y="0" width="16" height="16" fill="#7a7ab8"/><path d="M1,15 H8 V1 H15" fill="none" stroke="#6ab06a" stroke-width="1" stroke-dasharray="1,1"/></g><g transform="translate(565.0,171.4) scale(2.062,2.894)"><path d="M0,15 H4 V1 H10" fill="none" stroke="#6ac06a" stroke-width="1.2" stroke-dasharray="1,1"/><rect x="2.5" y="0" width="3" height="16" fill="#9a9ad8" opacity="0.7"/><rect x="2" y="1" width="1" height="14" fill="#f0f060"/></g><g transform="translate(611.5,171.4) scale(2.056,2.894)"><path d="M0,15 H6 V1 H16" fill="none" stroke="#6ac06a" stroke-width="1.2" stroke-dasharray="1,1"/></g><g transform="translate(659.4,171.4) scale(1.962,2.894)"><path d="M0,15 H6 V1 H16" fill="none" stroke="#6ac06a" stroke-width="1.2" stroke-dasharray="1,1"/><rect x="6" y="1" width="1" height="14" fill="#f0f060"/></g>
<rect x="140" y="28.7" width="3040" height="2.3" fill="#607088"/><rect x="3176" y="33" width="4" height="12" fill="#3a4a5a"/>
<rect x="140" y="33" width="3040" height="2" fill="#a8cce0"/>
<rect x="140" y="35" width="3040" height="2.2" fill="#c8f4fc"/>
<rect x="140" y="37.2" width="3040" height="1.8" fill="#a8c8dc"/>
<rect x="140" y="39" width="3040" height="2" fill="#5a6a7a"/>
<rect x="140" y="41" width="3040" height="2" fill="#202830"/>
<rect x="140" y="43" width="3040" height="2" fill="#5a7088"/>
<rect x="1638" y="29" width="46" height="17" fill="#98b3d3"/>
<rect x="1645.0" y="31" width="3" height="4" fill="#3a4a5a"/><rect x="1643.0" y="39" width="3" height="4" fill="#3a4a5a"/>
<rect x="1651.2" y="31" width="3" height="4" fill="#3a4a5a"/><rect x="1649.2" y="39" width="3" height="4" fill="#3a4a5a"/>
<rect x="1657.4" y="31" width="3" height="4" fill="#3a4a5a"/><rect x="1655.4" y="39" width="3" height="4" fill="#3a4a5a"/>
<rect x="1663.6" y="31" width="3" height="4" fill="#3a4a5a"/><rect x="1661.6" y="39" width="3" height="4" fill="#3a4a5a"/>
<rect x="1669.8" y="31" width="3" height="4" fill="#3a4a5a"/><rect x="1667.8" y="39" width="3" height="4" fill="#3a4a5a"/>
<rect x="1676.0" y="31" width="3" height="4" fill="#3a4a5a"/><rect x="1674.0" y="39" width="3" height="4" fill="#3a4a5a"/>
<rect x="28" y="55" width="3198" height="2" fill="#8aa4c0"/>
<rect x="28" y="29" width="31" height="26" fill="#4a5a6a"/><rect x="29" y="29" width="26" height="21" fill="#000"/><path d="M30,45 H36 V32 H45 V36 H53" fill="none" stroke="#0a8a2a" stroke-width="3"/><rect x="37" y="29" width="2" height="21" fill="#30d0c0"/><rect x="44" y="43" width="10" height="4" fill="#4a10d0"/>
<clipPath id="tt"><rect x="60" y="29" width="80" height="17"/></clipPath>
<g clip-path="url(#tt)"><text transform="translate(68,45) scale(0.72,1)" font-family="Liberation Sans" font-size="31" fill="#404a66">Wave</text></g>
<rect x="3190" y="29" width="20" height="14" fill="#eee"/><rect x="3190" y="43" width="20" height="2" fill="#888"/><rect x="3197" y="31" width="5" height="8" fill="#666"/>
<rect x="3220" y="29" width="6" height="14" fill="#ddd"/><rect x="3222" y="29" width="3" height="12" fill="#000"/>
<text transform="translate(707.5,289) scale(0.665,1)" font-family="Liberation Sans" font-size="33" fill="#f0f0f0" stroke="#f0f0f0" stroke-width="0.7">Messages</text>
<text transform="translate(809,1982) scale(0.68,1)" text-anchor="end" font-family="Liberation Sans" font-size="33" fill="#f0f0f0" stroke="#f0f0f0" stroke-width="0.7">Now</text>
<text transform="translate(809,2038) scale(0.70,1)" text-anchor="end" font-family="Liberation Sans" font-size="33" fill="#2a2a3a" stroke="#2a2a3a" stroke-width="0.5">Cursor 1</text>
<text transform="translate(1273,1982) scale(0.68,1)" text-anchor="end" font-family="Liberation Sans" font-size="33" fill="#f0f0f0" stroke="#f0f0f0" stroke-width="0.7">3200 ns</text>
<text transform="translate(1273,2038) scale(0.68,1)" text-anchor="end" font-family="Liberation Sans" font-size="33" fill="#2a2a3a" stroke="#2a2a3a" stroke-width="0.5">2050 ns</text>
<path d="M52,1958 L55,1980 M60,1958 L58,1980 M64,1958 L66,1980" stroke="#bbb" stroke-width="3"/><rect x="49" y="1977" width="20" height="4" fill="#4a90e0"/><path d="M48,1979 L53,1974 V1984 Z M70,1979 L65,1974 V1984 Z" fill="#4a90e0"/>
<rect x="72" y="1956" width="23" height="30" fill="#c8d8f0"/><rect x="72" y="1956" width="23" height="6" fill="#5a8ad8"/><rect x="75" y="1965" width="10" height="3" fill="#6a9ad8"/><rect x="75" y="1972" width="8" height="3" fill="#8aaad8"/><ellipse cx="82" cy="1984" rx="4" ry="4" fill="#7aa0e0"/>
<ellipse cx="110.2" cy="1970.6" rx="10.8" ry="15" fill="#5ab05a"/><ellipse cx="110.2" cy="1968" rx="8" ry="10" fill="#7ac87a"/><ellipse cx="110.2" cy="1971" rx="3" ry="5" fill="#f4fff4"/>
<path d="M58,2024 V2016 Q58,2009 65.5,2009 Q73,2009 73,2016 V2024" fill="none" stroke="#bbb" stroke-width="3"/><rect x="54" y="2022" width="23" height="17" fill="#f0c850"/><rect x="64" y="2028" width="3" height="5" fill="#a08030"/>
<path d="M82,2036 L96,2016 L102,2020 L88,2039 Z" fill="#7aa0e8"/><path d="M96,2016 L100,2008 L104,2018 Z" fill="#ccc"/>
<ellipse cx="118.5" cy="2024.5" rx="10.8" ry="15" fill="#e85a4a"/><ellipse cx="118.5" cy="2020" rx="8" ry="9" fill="#f08070"/><rect x="112" y="2020" width="13" height="6" fill="#fff0f0"/>
<g clip-path="url(#wc)">
<rect x="1375.0" y="311" width="2.2" height="1623" fill="#5c5c5c"/>
<rect x="1460.9" y="311" width="2.2" height="1623" fill="#5c5c5c"/>
<rect x="1546.8" y="311" width="2.2" height="1623" fill="#5c5c5c"/>
<rect x="1632.7" y="311" width="2.2" height="1623" fill="#5c5c5c"/>
<rect x="1718.6" y="311" width="2.2" height="1623" fill="#5c5c5c"/>
<rect x="1804.5" y="311" width="2.2" height="1623" fill="#5c5c5c"/>
<rect x="1890.4" y="311" width="2.2" height="1623" fill="#5c5c5c"/>
<rect x="1976.3" y="311" width="2.2" height="1623" fill="#5c5c5c"/>
<rect x="2062.2" y="311" width="2.2" height="1623" fill="#5c5c5c"/>
<rect x="2148.1" y="311" width="2.2" height="1623" fill="#5c5c5c"/>
<rect x="2234.0" y="311" width="2.2" height="1623" fill="#5c5c5c"/>
<rect x="2319.9" y="311" width="2.2" height="1623" fill="#5c5c5c"/>
<rect x="2405.8" y="311" width="2.2" height="1623" fill="#5c5c5c"/>
<rect x="2491.7" y="311" width="2.2" height="1623" fill="#5c5c5c"/>
<rect x="2577.6" y="311" width="2.2" height="1623" fill="#5c5c5c"/>
<rect x="2663.5" y="311" width="2.2" height="1623" fill="#5c5c5c"/>
<rect x="2749.4" y="311" width="2.2" height="1623" fill="#5c5c5c"/>
<rect x="2835.3" y="311" width="2.2" height="1623" fill="#5c5c5c"/>
<rect x="2921.2" y="311" width="2.2" height="1623" fill="#5c5c5c"/>
<rect x="3007.1" y="311" width="2.2" height="1623" fill="#5c5c5c"/>
<rect x="3093.0" y="311" width="2.2" height="1623" fill="#5c5c5c"/>
<rect x="3178.9" y="311" width="2.2" height="1623" fill="#5c5c5c"/>
<path d="M1300.0,357.3 H1376.0 V323.2 H1461.9 V357.3 H1547.8 V323.2 H1633.7 V357.3 H1719.6 V323.2 H1805.5 V357.3 H1891.4 V323.2 H1977.3 V357.3 H2063.2 V323.2 H2149.1 V357.3 H2235.0 V323.2 H2320.9 V357.3 H2406.8 V323.2 H2492.7 V357.3 H2578.6 V323.2 H2664.5 V357.3 H2750.4 V323.2 H2836.3 V357.3 H2922.2 V323.2 H3008.1 V357.3 H3094.0 V323.2 H3179.9 V357.3 M1300.0,371.1 H3179.9 M1300.0,501.0 H1461.9 V466.9 H1633.7 V501.0 H2149.1 V466.9 H2320.9 V501.0 H2836.3 V466.9 H3008.1 V501.0 H3179.9 M1300.0,596.8 H3179.9 M1300.0,706.4 H1376.0 V740.5 H1891.4 V706.4 H2063.2 V740.5 H2578.6 V706.4 H2750.4 V740.5 H3179.9 M1300.0,788.4 H1376.0 V754.3 H1461.9 V788.4 H1547.8 V754.3 H1633.7 V788.4 H1719.6 V754.3 H1805.5 V788.4 H1891.4 V754.3 H1977.3 V788.4 H2063.2 V754.3 H2149.1 V788.4 H2235.0 V754.3 H2320.9 V788.4 H2406.8 V754.3 H2492.7 V788.4 H2578.6 V754.3 H2664.5 V788.4 H2750.4 V754.3 H2836.3 V788.4 H2922.2 V754.3 H3008.1 V788.4 H3094.0 V754.3 H3179.9 V788.4 M1300.0,802.2 H3179.9 M1300.0,932.1 H1461.9 V898.0 H1633.7 V932.1 H2149.1 V898.0 H2320.9 V932.1 H2836.3 V898.0 H3008.1 V932.1 H3179.9 M1300.0,1027.9 H3179.9 M1300.0,1137.5 H1376.0 V1171.6 H1891.4 V1137.5 H2063.2 V1171.6 H2578.6 V1137.5 H2750.4 V1171.6 H3179.9 M1300.0,1185.4 H1376.0 V1219.5 H1891.4 V1185.4 H2063.2 V1219.5 H2578.6 V1185.4 H2750.4 V1219.5 H3179.9 M1300.0,1233.3 H1376.0 V1267.4 H1461.9 V1233.3 H2063.2 V1267.4 H2149.1 V1233.3 H2750.4 V1267.4 H2836.3 V1233.3 H3179.9 M1300.0,1315.3 H3179.9 M1300.0,1472.8 H3179.9 M1300.0,1712.3 H1376.0 V1746.4 H1891.4 V1712.3 H2063.2 V1746.4 H2578.6 V1712.3 H2750.4 V1746.4 H3179.9 M1300.0,1808.1 H1376.0 V1842.2 H1547.8 V1808.1 H2063.2 V1842.2 H2235.0 V1808.1 H2750.4 V1842.2 H2922.2 V1808.1 H3179.9" fill="none" stroke="#00b000" stroke-width="3.5"/>
<path d="M1300.0,419.0 H1458.9 M1300.0,453.1 H1458.9 M1464.9,419.0 H2146.1 M1464.9,453.1 H2146.1 M1458.9,419.0 L1461.3,430.1 V442.1 L1458.9,453.1 M1464.9,419.0 L1462.5,430.1 V442.1 L1464.9,453.1 M2152.1,419.0 H2833.3 M2152.1,453.1 H2833.3 M2146.1,419.0 L2148.5,430.1 V442.1 L2146.1,453.1 M2152.1,419.0 L2149.7,430.1 V442.1 L2152.1,453.1 M2839.3,419.0 H3179.9 M2839.3,453.1 H3179.9 M2833.3,419.0 L2835.7,430.1 V442.1 L2833.3,453.1 M2839.3,419.0 L2836.9,430.1 V442.1 L2839.3,453.1 M1300.0,514.8 H3179.9 M1300.0,548.9 H3179.9 M1300.0,610.6 H3179.9 M1300.0,644.7 H3179.9 M1300.0,658.5 H1888.4 M1300.0,692.6 H1888.4 M1894.4,658.5 H2575.6 M1894.4,692.6 H2575.6 M1888.4,658.5 L1890.8,669.5 V681.5 L1888.4,692.6 M1894.4,658.5 L1892.0,669.5 V681.5 L1894.4,692.6 M2581.6,658.5 H3179.9 M2581.6,692.6 H3179.9 M2575.6,658.5 L2578.0,669.5 V681.5 L2575.6,692.6 M2581.6,658.5 L2579.2,669.5 V681.5 L2581.6,692.6 M1300.0,850.1 H1458.9 M1300.0,884.2 H1458.9 M1464.9,850.1 H2146.1 M1464.9,884.2 H2146.1 M1458.9,850.1 L1461.3,861.1 V873.1 L1458.9,884.2 M1464.9,850.1 L1462.5,861.1 V873.1 L1464.9,884.2 M2152.1,850.1 H2833.3 M2152.1,884.2 H2833.3 M2146.1,850.1 L2148.5,861.1 V873.1 L2146.1,884.2 M2152.1,850.1 L2149.7,861.1 V873.1 L2152.1,884.2 M2839.3,850.1 H3179.9 M2839.3,884.2 H3179.9 M2833.3,850.1 L2835.7,861.1 V873.1 L2833.3,884.2 M2839.3,850.1 L2836.9,861.1 V873.1 L2839.3,884.2 M1300.0,945.9 H3179.9 M1300.0,980.0 H3179.9 M1300.0,1041.7 H3179.9 M1300.0,1075.8 H3179.9 M1300.0,1089.6 H1888.4 M1300.0,1123.7 H1888.4 M1894.4,1089.6 H2575.6 M1894.4,1123.7 H2575.6 M1888.4,1089.6 L1890.8,1100.7 V1112.7 L1888.4,1123.7 M1894.4,1089.6 L1892.0,1100.7 V1112.7 L1894.4,1123.7 M2581.6,1089.6 H3179.9 M2581.6,1123.7 H3179.9 M2575.6,1089.6 L2578.0,1100.7 V1112.7 L2575.6,1123.7 M2581.6,1089.6 L2579.2,1100.7 V1112.7 L2581.6,1123.7 M1300.0,1329.1 H3179.9 M1300.0,1363.2 H3179.9 M1300.0,1377.0 H3179.9 M1300.0,1411.1 H3179.9 M1300.0,1424.9 H1373.0 M1300.0,1459.0 H1373.0 M1379.0,1424.9 H1544.8 M1379.0,1459.0 H1544.8 M1373.0,1424.9 L1375.4,1436.0 V1448.0 L1373.0,1459.0 M1379.0,1424.9 L1376.6,1436.0 V1448.0 L1379.0,1459.0 M1550.8,1424.9 H1716.6 M1550.8,1459.0 H1716.6 M1544.8,1424.9 L1547.2,1436.0 V1448.0 L1544.8,1459.0 M1550.8,1424.9 L1548.4,1436.0 V1448.0 L1550.8,1459.0 M1722.6,1424.9 H1888.4 M1722.6,1459.0 H1888.4 M1716.6,1424.9 L1719.0,1436.0 V1448.0 L1716.6,1459.0 M1722.6,1424.9 L1720.2,1436.0 V1448.0 L1722.6,1459.0 M1894.4,1424.9 H2060.2 M1894.4,1459.0 H2060.2 M1888.4,1424.9 L1890.8,1436.0 V1448.0 L1888.4,1459.0 M1894.4,1424.9 L1892.0,1436.0 V1448.0 L1894.4,1459.0 M2066.2,1424.9 H2232.0 M2066.2,1459.0 H2232.0 M2060.2,1424.9 L2062.6,1436.0 V1448.0 L2060.2,1459.0 M2066.2,1424.9 L2063.8,1436.0 V1448.0 L2066.2,1459.0 M2238.0,1424.9 H2403.8 M2238.0,1459.0 H2403.8 M2232.0,1424.9 L2234.4,1436.0 V1448.0 L2232.0,1459.0 M2238.0,1424.9 L2235.6,1436.0 V1448.0 L2238.0,1459.0 M2409.8,1424.9 H2575.6 M2409.8,1459.0 H2575.6 M2403.8,1424.9 L2406.2,1436.0 V1448.0 L2403.8,1459.0 M2409.8,1424.9 L2407.4,1436.0 V1448.0 L2409.8,1459.0 M2581.6,1424.9 H2747.4 M2581.6,1459.0 H2747.4 M2575.6,1424.9 L2578.0,1436.0 V1448.0 L2575.6,1459.0 M2581.6,1424.9 L2579.2,1436.0 V1448.0 L2581.6,1459.0 M2753.4,1424.9 H2919.2 M2753.4,1459.0 H2919.2 M2747.4,1424.9 L2749.8,1436.0 V1448.0 L2747.4,1459.0 M2753.4,1424.9 L2751.0,1436.0 V1448.0 L2753.4,1459.0 M2925.2,1424.9 H3091.0 M2925.2,1459.0 H3091.0 M2919.2,1424.9 L2921.6,1436.0 V1448.0 L2919.2,1459.0 M2925.2,1424.9 L2922.8,1436.0 V1448.0 L2925.2,1459.0 M3097.0,1424.9 H3179.9 M3097.0,1459.0 H3179.9 M3091.0,1424.9 L3093.4,1436.0 V1448.0 L3091.0,1459.0 M3097.0,1424.9 L3094.6,1436.0 V1448.0 L3097.0,1459.0 M1300.0,1520.7 H1373.0 M1300.0,1554.8 H1373.0 M1379.0,1520.7 H1544.8 M1379.0,1554.8 H1544.8 M1373.0,1520.7 L1375.4,1531.8 V1543.8 L1373.0,1554.8 M1379.0,1520.7 L1376.6,1531.8 V1543.8 L1379.0,1554.8 M1550.8,1520.7 H1716.6 M1550.8,1554.8 H1716.6 M1544.8,1520.7 L1547.2,1531.8 V1543.8 L1544.8,1554.8 M1550.8,1520.7 L1548.4,1531.8 V1543.8 L1550.8,1554.8 M1722.6,1520.7 H1888.4 M1722.6,1554.8 H1888.4 M1716.6,1520.7 L1719.0,1531.8 V1543.8 L1716.6,1554.8 M1722.6,1520.7 L1720.2,1531.8 V1543.8 L1722.6,1554.8 M1894.4,1520.7 H2060.2 M1894.4,1554.8 H2060.2 M1888.4,1520.7 L1890.8,1531.8 V1543.8 L1888.4,1554.8 M1894.4,1520.7 L1892.0,1531.8 V1543.8 L1894.4,1554.8 M2066.2,1520.7 H2232.0 M2066.2,1554.8 H2232.0 M2060.2,1520.7 L2062.6,1531.8 V1543.8 L2060.2,1554.8 M2066.2,1520.7 L2063.8,1531.8 V1543.8 L2066.2,1554.8 M2238.0,1520.7 H2403.8 M2238.0,1554.8 H2403.8 M2232.0,1520.7 L2234.4,1531.8 V1543.8 L2232.0,1554.8 M2238.0,1520.7 L2235.6,1531.8 V1543.8 L2238.0,1554.8 M2409.8,1520.7 H2575.6 M2409.8,1554.8 H2575.6 M2403.8,1520.7 L2406.2,1531.8 V1543.8 L2403.8,1554.8 M2409.8,1520.7 L2407.4,1531.8 V1543.8 L2409.8,1554.8 M2581.6,1520.7 H2747.4 M2581.6,1554.8 H2747.4 M2575.6,1520.7 L2578.0,1531.8 V1543.8 L2575.6,1554.8 M2581.6,1520.7 L2579.2,1531.8 V1543.8 L2581.6,1554.8 M2753.4,1520.7 H2919.2 M2753.4,1554.8 H2919.2 M2747.4,1520.7 L2749.8,1531.8 V1543.8 L2747.4,1554.8 M2753.4,1520.7 L2751.0,1531.8 V1543.8 L2753.4,1554.8 M2925.2,1520.7 H3091.0 M2925.2,1554.8 H3091.0 M2919.2,1520.7 L2921.6,1531.8 V1543.8 L2919.2,1554.8 M2925.2,1520.7 L2922.8,1531.8 V1543.8 L2925.2,1554.8 M3097.0,1520.7 H3179.9 M3097.0,1554.8 H3179.9 M3091.0,1520.7 L3093.4,1531.8 V1543.8 L3091.0,1554.8 M3097.0,1520.7 L3094.6,1531.8 V1543.8 L3097.0,1554.8 M1300.0,1568.6 H1373.0 M1300.0,1602.7 H1373.0 M1379.0,1568.6 H1716.6 M1379.0,1602.7 H1716.6 M1373.0,1568.6 L1375.4,1579.6 V1591.6 L1373.0,1602.7 M1379.0,1568.6 L1376.6,1579.6 V1591.6 L1379.0,1602.7 M1722.6,1568.6 H2060.2 M1722.6,1602.7 H2060.2 M1716.6,1568.6 L1719.0,1579.6 V1591.6 L1716.6,1602.7 M1722.6,1568.6 L1720.2,1579.6 V1591.6 L1722.6,1602.7 M2066.2,1568.6 H2403.8 M2066.2,1602.7 H2403.8 M2060.2,1568.6 L2062.6,1579.6 V1591.6 L2060.2,1602.7 M2066.2,1568.6 L2063.8,1579.6 V1591.6 L2066.2,1602.7 M2409.8,1568.6 H2747.4 M2409.8,1602.7 H2747.4 M2403.8,1568.6 L2406.2,1579.6 V1591.6 L2403.8,1602.7 M2409.8,1568.6 L2407.4,1579.6 V1591.6 L2409.8,1602.7 M2753.4,1568.6 H3091.0 M2753.4,1602.7 H3091.0 M2747.4,1568.6 L2749.8,1579.6 V1591.6 L2747.4,1602.7 M2753.4,1568.6 L2751.0,1579.6 V1591.6 L2753.4,1602.7 M3097.0,1568.6 H3179.9 M3097.0,1602.7 H3179.9 M3091.0,1568.6 L3093.4,1579.6 V1591.6 L3091.0,1602.7 M3097.0,1568.6 L3094.6,1579.6 V1591.6 L3097.0,1602.7 M1300.0,1616.5 H1544.8 M1300.0,1650.6 H1544.8 M1550.8,1616.5 H1716.6 M1550.8,1650.6 H1716.6 M1544.8,1616.5 L1547.2,1627.5 V1639.5 L1544.8,1650.6 M1550.8,1616.5 L1548.4,1627.5 V1639.5 L1550.8,1650.6 M1722.6,1616.5 H1888.4 M1722.6,1650.6 H1888.4 M1716.6,1616.5 L1719.0,1627.5 V1639.5 L1716.6,1650.6 M1722.6,1616.5 L1720.2,1627.5 V1639.5 L1722.6,1650.6 M1894.4,1616.5 H2060.2 M1894.4,1650.6 H2060.2 M1888.4,1616.5 L1890.8,1627.5 V1639.5 L1888.4,1650.6 M1894.4,1616.5 L1892.0,1627.5 V1639.5 L1894.4,1650.6 M2066.2,1616.5 H2232.0 M2066.2,1650.6 H2232.0 M2060.2,1616.5 L2062.6,1627.5 V1639.5 L2060.2,1650.6 M2066.2,1616.5 L2063.8,1627.5 V1639.5 L2066.2,1650.6 M2238.0,1616.5 H2403.8 M2238.0,1650.6 H2403.8 M2232.0,1616.5 L2234.4,1627.5 V1639.5 L2232.0,1650.6 M2238.0,1616.5 L2235.6,1627.5 V1639.5 L2238.0,1650.6 M2409.8,1616.5 H2575.6 M2409.8,1650.6 H2575.6 M2403.8,1616.5 L2406.2,1627.5 V1639.5 L2403.8,1650.6 M2409.8,1616.5 L2407.4,1627.5 V1639.5 L2409.8,1650.6 M2581.6,1616.5 H2747.4 M2581.6,1650.6 H2747.4 M2575.6,1616.5 L2578.0,1627.5 V1639.5 L2575.6,1650.6 M2581.6,1616.5 L2579.2,1627.5 V1639.5 L2581.6,1650.6 M2753.4,1616.5 H2919.2 M2753.4,1650.6 H2919.2 M2747.4,1616.5 L2749.8,1627.5 V1639.5 L2747.4,1650.6 M2753.4,1616.5 L2751.0,1627.5 V1639.5 L2753.4,1650.6 M2925.2,1616.5 H3091.0 M2925.2,1650.6 H3091.0 M2919.2,1616.5 L2921.6,1627.5 V1639.5 L2919.2,1650.6 M2925.2,1616.5 L2922.8,1627.5 V1639.5 L2925.2,1650.6 M3097.0,1616.5 H3179.9 M3097.0,1650.6 H3179.9 M3091.0,1616.5 L3093.4,1627.5 V1639.5 L3091.0,1650.6 M3097.0,1616.5 L3094.6,1627.5 V1639.5 L3097.0,1650.6 M1300.0,1664.4 H1373.0 M1300.0,1698.5 H1373.0 M1379.0,1664.4 H1716.6 M1379.0,1698.5 H1716.6 M1373.0,1664.4 L1375.4,1675.5 V1687.5 L1373.0,1698.5 M1379.0,1664.4 L1376.6,1675.5 V1687.5 L1379.0,1698.5 M1722.6,1664.4 H2060.2 M1722.6,1698.5 H2060.2 M1716.6,1664.4 L1719.0,1675.5 V1687.5 L1716.6,1698.5 M1722.6,1664.4 L1720.2,1675.5 V1687.5 L1722.6,1698.5 M2066.2,1664.4 H2403.8 M2066.2,1698.5 H2403.8 M2060.2,1664.4 L2062.6,1675.5 V1687.5 L2060.2,1698.5 M2066.2,1664.4 L2063.8,1675.5 V1687.5 L2066.2,1698.5 M2409.8,1664.4 H2747.4 M2409.8,1698.5 H2747.4 M2403.8,1664.4 L2406.2,1675.5 V1687.5 L2403.8,1698.5 M2409.8,1664.4 L2407.4,1675.5 V1687.5 L2409.8,1698.5 M2753.4,1664.4 H3091.0 M2753.4,1698.5 H3091.0 M2747.4,1664.4 L2749.8,1675.5 V1687.5 L2747.4,1698.5 M2753.4,1664.4 L2751.0,1675.5 V1687.5 L2753.4,1698.5 M3097.0,1664.4 H3179.9 M3097.0,1698.5 H3179.9 M3091.0,1664.4 L3093.4,1675.5 V1687.5 L3091.0,1698.5 M3097.0,1664.4 L3094.6,1675.5 V1687.5 L3097.0,1698.5 M1300.0,1760.2 H1373.0 M1300.0,1794.3 H1373.0 M1379.0,1760.2 H1544.8 M1379.0,1794.3 H1544.8 M1373.0,1760.2 L1375.4,1771.2 V1783.2 L1373.0,1794.3 M1379.0,1760.2 L1376.6,1771.2 V1783.2 L1379.0,1794.3 M1550.8,1760.2 H2060.2 M1550.8,1794.3 H2060.2 M1544.8,1760.2 L1547.2,1771.2 V1783.2 L1544.8,1794.3 M1550.8,1760.2 L1548.4,1771.2 V1783.2 L1550.8,1794.3 M2066.2,1760.2 H2232.0 M2066.2,1794.3 H2232.0 M2060.2,1760.2 L2062.6,1771.2 V1783.2 L2060.2,1794.3 M2066.2,1760.2 L2063.8,1771.2 V1783.2 L2066.2,1794.3 M2238.0,1760.2 H2403.8 M2238.0,1794.3 H2403.8 M2232.0,1760.2 L2234.4,1771.2 V1783.2 L2232.0,1794.3 M2238.0,1760.2 L2235.6,1771.2 V1783.2 L2238.0,1794.3 M2409.8,1760.2 H2747.4 M2409.8,1794.3 H2747.4 M2403.8,1760.2 L2406.2,1771.2 V1783.2 L2403.8,1794.3 M2409.8,1760.2 L2407.4,1771.2 V1783.2 L2409.8,1794.3 M2753.4,1760.2 H2919.2 M2753.4,1794.3 H2919.2 M2747.4,1760.2 L2749.8,1771.2 V1783.2 L2747.4,1794.3 M2753.4,1760.2 L2751.0,1771.2 V1783.2 L2753.4,1794.3 M2925.2,1760.2 H3091.0 M2925.2,1794.3 H3091.0 M2919.2,1760.2 L2921.6,1771.2 V1783.2 L2919.2,1794.3 M2925.2,1760.2 L2922.8,1771.2 V1783.2 L2925.2,1794.3 M3097.0,1760.2 H3179.9 M3097.0,1794.3 H3179.9 M3091.0,1760.2 L3093.4,1771.2 V1783.2 L3091.0,1794.3 M3097.0,1760.2 L3094.6,1771.2 V1783.2 L3097.0,1794.3 M1300.0,1856.0 H1544.8 M1300.0,1890.1 H1544.8 M1550.8,1856.0 H2232.0 M1550.8,1890.1 H2232.0 M1544.8,1856.0 L1547.2,1867.0 V1879.0 L1544.8,1890.1 M1550.8,1856.0 L1548.4,1867.0 V1879.0 L1550.8,1890.1 M2238.0,1856.0 H2919.2 M2238.0,1890.1 H2919.2 M2232.0,1856.0 L2234.4,1867.0 V1879.0 L2232.0,1890.1 M2238.0,1856.0 L2235.6,1867.0 V1879.0 L2238.0,1890.1 M2925.2,1856.0 H3179.9 M2925.2,1890.1 H3179.9 M2919.2,1856.0 L2921.6,1867.0 V1879.0 L2919.2,1890.1 M2925.2,1856.0 L2922.8,1867.0 V1879.0 L2925.2,1890.1 M1300.0,1903.9 H1544.8 M1300.0,1938.0 H1544.8 M1550.8,1903.9 H2232.0 M1550.8,1938.0 H2232.0 M1544.8,1903.9 L1547.2,1915.0 V1927.0 L1544.8,1938.0 M1550.8,1903.9 L1548.4,1915.0 V1927.0 L1550.8,1938.0 M2238.0,1903.9 H2919.2 M2238.0,1938.0 H2919.2 M2232.0,1903.9 L2234.4,1915.0 V1927.0 L2232.0,1938.0 M2238.0,1903.9 L2235.6,1915.0 V1927.0 L2238.0,1938.0 M2925.2,1903.9 H3179.9 M2925.2,1938.0 H3179.9 M2919.2,1903.9 L2921.6,1915.0 V1927.0 L2919.2,1938.0 M2925.2,1903.9 L2922.8,1915.0 V1927.0 L2925.2,1938.0" fill="none" stroke="#86c486" stroke-width="3.3"/>
<g font-family="Liberation Sans" font-size="34" fill="#f2f2f2" stroke="#f2f2f2" stroke-width="1.3" letter-spacing="7.04">
<text transform="translate(1303.0,448.9) scale(0.5,1)">00000110</text>
<text transform="translate(1466.9,448.9) scale(0.5,1)">00000111</text>
<text transform="translate(2154.1,448.9) scale(0.5,1)">00001000</text>
<text transform="translate(2841.3,448.9) scale(0.5,1)">00001001</text>
<text transform="translate(1303.0,544.7) scale(0.5,1)">00000</text>
<text transform="translate(1303.0,640.5) scale(0.5,1)">00000000</text>
<text transform="translate(1303.0,688.4) scale(0.5,1)">0000001001110110</text>
<text transform="translate(1896.4,688.4) scale(0.5,1)">0000010000111110</text>
<text transform="translate(2583.6,688.4) scale(0.5,1)">0000011001001000</text>
<text transform="translate(1303.0,880.0) scale(0.5,1)">00000110</text>
<text transform="translate(1466.9,880.0) scale(0.5,1)">00000111</text>
<text transform="translate(2154.1,880.0) scale(0.5,1)">00001000</text>
<text transform="translate(2841.3,880.0) scale(0.5,1)">00001001</text>
<text transform="translate(1303.0,975.8) scale(0.5,1)">00000</text>
<text transform="translate(1303.0,1071.7) scale(0.5,1)">00000000</text>
<text transform="translate(1303.0,1119.6) scale(0.5,1)">0000001001110110</text>
<text transform="translate(1896.4,1119.6) scale(0.5,1)">0000010000111110</text>
<text transform="translate(2583.6,1119.6) scale(0.5,1)">0000011001001000</text>
<text transform="translate(1303.0,1359.1) scale(0.5,1)">00000</text>
<text transform="translate(1303.0,1407.0) scale(0.5,1)">00001</text>
<text transform="translate(1303.0,1454.9) scale(0.5,1)">00011</text>
<text transform="translate(1381.0,1454.9) scale(0.5,1)">00000</text>
<text transform="translate(1552.8,1454.9) scale(0.5,1)">00001</text>
<text transform="translate(1724.6,1454.9) scale(0.5,1)">00010</text>
<text transform="translate(1896.4,1454.9) scale(0.5,1)">00011</text>
<text transform="translate(2068.2,1454.9) scale(0.5,1)">00000</text>
<text transform="translate(2240.0,1454.9) scale(0.5,1)">00001</text>
<text transform="translate(2411.8,1454.9) scale(0.5,1)">00010</text>
<text transform="translate(2583.6,1454.9) scale(0.5,1)">00011</text>
<text transform="translate(2755.4,1454.9) scale(0.5,1)">00000</text>
<text transform="translate(2927.2,1454.9) scale(0.5,1)">00001</text>
<text transform="translate(3099.0,1454.9) scale(0.5,1)">00010</text>
<text transform="translate(1303.0,1550.7) scale(0.5,1)">00011</text>
<text transform="translate(1381.0,1550.7) scale(0.5,1)">00000</text>
<text transform="translate(1552.8,1550.7) scale(0.5,1)">00001</text>
<text transform="translate(1724.6,1550.7) scale(0.5,1)">00010</text>
<text transform="translate(1896.4,1550.7) scale(0.5,1)">00011</text>
<text transform="translate(2068.2,1550.7) scale(0.5,1)">00000</text>
<text transform="translate(2240.0,1550.7) scale(0.5,1)">00001</text>
<text transform="translate(2411.8,1550.7) scale(0.5,1)">00010</text>
<text transform="translate(2583.6,1550.7) scale(0.5,1)">00011</text>
<text transform="translate(2755.4,1550.7) scale(0.5,1)">00000</text>
<text transform="translate(2927.2,1550.7) scale(0.5,1)">00001</text>
<text transform="translate(3099.0,1550.7) scale(0.5,1)">00010</text>
<text transform="translate(1303.0,1598.5) scale(0.5,1)">010...</text>
<text transform="translate(1381.0,1598.5) scale(0.5,1)">01111110</text>
<text transform="translate(1724.6,1598.5) scale(0.5,1)">01000010</text>
<text transform="translate(2068.2,1598.5) scale(0.5,1)">01111110</text>
<text transform="translate(2411.8,1598.5) scale(0.5,1)">01000010</text>
<text transform="translate(2755.4,1598.5) scale(0.5,1)">01111110</text>
<text transform="translate(3099.0,1598.5) scale(0.5,1)">0100...</text>
<text transform="translate(1303.0,1646.5) scale(0.5,1)">00000000</text>
<text transform="translate(1552.8,1646.5) scale(0.5,1)">00000111</text>
<text transform="translate(1724.6,1646.5) scale(0.5,1)">00000110</text>
<text transform="translate(1896.4,1646.5) scale(0.5,1)">00000101</text>
<text transform="translate(2068.2,1646.5) scale(0.5,1)">00000000</text>
<text transform="translate(2240.0,1646.5) scale(0.5,1)">00001000</text>
<text transform="translate(2411.8,1646.5) scale(0.5,1)">00000111</text>
<text transform="translate(2583.6,1646.5) scale(0.5,1)">00000110</text>
<text transform="translate(2755.4,1646.5) scale(0.5,1)">00000101</text>
<text transform="translate(2927.2,1646.5) scale(0.5,1)">00001001</text>
<text transform="translate(3099.0,1646.5) scale(0.5,1)">0000...</text>
<text transform="translate(1303.0,1694.4) scale(0.5,1)">010...</text>
<text transform="translate(1381.0,1694.4) scale(0.5,1)">01111110</text>
<text transform="translate(1724.6,1694.4) scale(0.5,1)">01000010</text>
<text transform="translate(2068.2,1694.4) scale(0.5,1)">01111110</text>
<text transform="translate(2411.8,1694.4) scale(0.5,1)">01000010</text>
<text transform="translate(2755.4,1694.4) scale(0.5,1)">01111110</text>
<text transform="translate(3099.0,1694.4) scale(0.5,1)">0100...</text>
<text transform="translate(1303.0,1790.2) scale(0.5,1)">000...</text>
<text transform="translate(1381.0,1790.2) scale(0.5,1)">0000001011...</text>
<text transform="translate(1552.8,1790.2) scale(0.5,1)">0000010000111110</text>
<text transform="translate(2068.2,1790.2) scale(0.5,1)">0000001101...</text>
<text transform="translate(2240.0,1790.2) scale(0.5,1)">0000010011...</text>
<text transform="translate(2411.8,1790.2) scale(0.5,1)">0000011001001000</text>
<text transform="translate(2755.4,1790.2) scale(0.5,1)">0000001111...</text>
<text transform="translate(2927.2,1790.2) scale(0.5,1)">0000010110...</text>
<text transform="translate(3099.0,1790.2) scale(0.5,1)">0000...</text>
<text transform="translate(1303.0,1886.0) scale(0.5,1)">00000110</text>
<text transform="translate(1552.8,1886.0) scale(0.5,1)">00000111</text>
<text transform="translate(2240.0,1886.0) scale(0.5,1)">00001000</text>
<text transform="translate(2927.2,1886.0) scale(0.5,1)">00001001</text>
<text transform="translate(1303.0,1933.9) scale(0.5,1)">00000101</text>
<text transform="translate(1552.8,1933.9) scale(0.5,1)">00000110</text>
<text transform="translate(2240.0,1933.9) scale(0.5,1)">00000111</text>
<text transform="translate(2927.2,1933.9) scale(0.5,1)">00001000</text>
</g>
</g>
<g clip-path="url(#tc)">
<rect x="1305.8" y="1948.5" width="3" height="11.5" fill="#00b400"/><rect x="1314.4" y="1948.5" width="3" height="11.5" fill="#00b400"/><rect x="1323.0" y="1948.5" width="3" height="11.5" fill="#00b400"/><rect x="1331.5" y="1948.5" width="3" height="11.5" fill="#00b400"/><rect x="1340.1" y="1948.5" width="3" height="11.5" fill="#00b400"/><rect x="1348.7" y="1948.5" width="3" height="11.5" fill="#00b400"/><rect x="1357.3" y="1948.5" width="3" height="11.5" fill="#00b400"/><rect x="1365.9" y="1948.5" width="3" height="11.5" fill="#00b400"/><rect x="1374.5" y="1939" width="3" height="21" fill="#00b400"/><rect x="1383.1" y="1948.5" width="3" height="11.5" fill="#00b400"/><rect x="1391.7" y="1948.5" width="3" height="11.5" fill="#00b400"/><rect x="1400.3" y="1948.5" width="3" height="11.5" fill="#00b400"/><rect x="1408.9" y="1948.5" width="3" height="11.5" fill="#00b400"/><rect x="1417.5" y="1948.5" width="3" height="11.5" fill="#00b400"/><rect x="1426.0" y="1948.5" width="3" height="11.5" fill="#00b400"/><rect x="1434.6" y="1948.5" width="3" height="11.5" fill="#00b400"/><rect x="1443.2" y="1948.5" width="3" height="11.5" fill="#00b400"/><rect x="1451.8" y="1948.5" width="3" height="11.5" fill="#00b400"/><rect x="1460.4" y="1939" width="3" height="21" fill="#00b400"/><rect x="1469.0" y="1948.5" width="3" height="11.5" fill="#00b400"/><rect x="1477.6" y="1948.5" width="3" height="11.5" fill="#00b400"/><rect x="1486.2" y="1948.5" width="3" height="11.5" fill="#00b400"/><rect x="1494.8" y="1948.5" width="3" height="11.5" fill="#00b400"/><rect x="1503.3" y="1948.5" width="3" height="11.5" fill="#00b400"/><rect x="1511.9" y="1948.5" width="3" height="11.5" fill="#00b400"/><rect x="1520.5" y="1948.5" width="3" height="11.5" fill="#00b400"/><rect x="1529.1" y="1948.5" width="3" height="11.5" fill="#00b400"/><rect x="1537.7" y="1948.5" width="3" height="11.5" fill="#00b400"/><rect x="1546.3" y="1939" width="3" height="21" fill="#00b400"/><rect x="1554.9" y="1948.5" width="3" height="11.5" fill="#00b400"/><rect x="1563.5" y="1948.5" width="3" height="11.5" fill="#00b400"/><rect x="1572.1" y="1948.5" width="3" height="11.5" fill="#00b400"/><rect x="1580.7" y="1948.5" width="3" height="11.5" fill="#00b400"/><rect x="1589.2" y="1948.5" width="3" height="11.5" fill="#00b400"/><rect x="1597.8" y="1948.5" width="3" height="11.5" fill="#00b400"/><rect x="1606.4" y="1948.5" width="3" height="11.5" fill="#00b400"/><rect x="1615.0" y="1948.5" width="3" height="11.5" fill="#00b400"/><rect x="1623.6" y="1948.5" width="3" height="11.5" fill="#00b400"/><rect x="1632.2" y="1939" width="3" height="21" fill="#00b400"/><rect x="1640.8" y="1948.5" width="3" height="11.5" fill="#00b400"/><rect x="1649.4" y="1948.5" width="3" height="11.5" fill="#00b400"/><rect x="1658.0" y="1948.5" width="3" height="11.5" fill="#00b400"/><rect x="1666.6" y="1948.5" width="3" height="11.5" fill="#00b400"/><rect x="1675.2" y="1948.5" width="3" height="11.5" fill="#00b400"/><rect x="1683.7" y="1948.5" width="3" height="11.5" fill="#00b400"/><rect x="1692.3" y="1948.5" width="3" height="11.5" fill="#00b400"/><rect x="1700.9" y="1948.5" width="3" height="11.5" fill="#00b400"/><rect x="1709.5" y="1948.5" width="3" height="11.5" fill="#00b400"/><rect x="1718.1" y="1939" width="3" height="21" fill="#00b400"/><rect x="1726.7" y="1948.5" width="3" height="11.5" fill="#00b400"/><rect x="1735.3" y="1948.5" width="3" height="11.5" fill="#00b400"/><rect x="1743.9" y="1948.5" width="3" height="11.5" fill="#00b400"/><rect x="1752.5" y="1948.5" width="3" height="11.5" fill="#00b400"/><rect x="1761.0" y="1948.5" width="3" height="11.5" fill="#00b400"/><rect x="1769.6" y="1948.5" width="3" height="11.5" fill="#00b400"/><rect x="1778.2" y="1948.5" width="3" height="11.5" fill="#00b400"/><rect x="1786.8" y="1948.5" width="3" height="11.5" fill="#00b400"/><rect x="1795.4" y="1948.5" width="3" height="11.5" fill="#00b400"/><rect x="1804.0" y="1939" width="3" height="21" fill="#00b400"/><rect x="1812.6" y="1948.5" width="3" height="11.5" fill="#00b400"/><rect x="1821.2" y="1948.5" width="3" height="11.5" fill="#00b400"/><rect x="1829.8" y="1948.5" width="3" height="11.5" fill="#00b400"/><rect x="1838.4" y="1948.5" width="3" height="11.5" fill="#00b400"/><rect x="1847.0" y="1948.5" width="3" height="11.5" fill="#00b400"/><rect x="1855.5" y="1948.5" width="3" height="11.5" fill="#00b400"/><rect x="1864.1" y="1948.5" width="3" height="11.5" fill="#00b400"/><rect x="1872.7" y="1948.5" width="3" height="11.5" fill="#00b400"/><rect x="1881.3" y="1948.5" width="3" height="11.5" fill="#00b400"/><rect x="1889.9" y="1939" width="3" height="21" fill="#00b400"/><rect x="1898.5" y="1948.5" width="3" height="11.5" fill="#00b400"/><rect x="1907.1" y="1948.5" width="3" height="11.5" fill="#00b400"/><rect x="1915.7" y="1948.5" width="3" height="11.5" fill="#00b400"/><rect x="1924.3" y="1948.5" width="3" height="11.5" fill="#00b400"/><rect x="1932.8" y="1948.5" width="3" height="11.5" fill="#00b400"/><rect x="1941.4" y="1948.5" width="3" height="11.5" fill="#00b400"/><rect x="1950.0" y="1948.5" width="3" height="11.5" fill="#00b400"/><rect x="1958.6" y="1948.5" width="3" height="11.5" fill="#00b400"/><rect x="1967.2" y="1948.5" width="3" height="11.5" fill="#00b400"/><rect x="1975.8" y="1939" width="3" height="21" fill="#00b400"/><rect x="1984.4" y="1948.5" width="3" height="11.5" fill="#00b400"/><rect x="1993.0" y="1948.5" width="3" height="11.5" fill="#00b400"/><rect x="2001.6" y="1948.5" width="3" height="11.5" fill="#00b400"/><rect x="2010.2" y="1948.5" width="3" height="11.5" fill="#00b400"/><rect x="2018.8" y="1948.5" width="3" height="11.5" fill="#00b400"/><rect x="2027.3" y="1948.5" width="3" height="11.5" fill="#00b400"/><rect x="2035.9" y="1948.5" width="3" height="11.5" fill="#00b400"/><rect x="2044.5" y="1948.5" width="3" height="11.5" fill="#00b400"/><rect x="2053.1" y="1948.5" width="3" height="11.5" fill="#00b400"/><rect x="2061.7" y="1939" width="3" height="21" fill="#00b400"/><rect x="2070.3" y="1948.5" width="3" height="11.5" fill="#00b400"/><rect x="2078.9" y="1948.5" width="3" height="11.5" fill="#00b400"/><rect x="2087.5" y="1948.5" width="3" height="11.5" fill="#00b400"/><rect x="2096.1" y="1948.5" width="3" height="11.5" fill="#00b400"/><rect x="2104.7" y="1948.5" width="3" height="11.5" fill="#00b400"/><rect x="2113.2" y="1948.5" width="3" height="11.5" fill="#00b400"/><rect x="2121.8" y="1948.5" width="3" height="11.5" fill="#00b400"/><rect x="2130.4" y="1948.5" width="3" height="11.5" fill="#00b400"/><rect x="2139.0" y="1948.5" width="3" height="11.5" fill="#00b400"/><rect x="2147.6" y="1939" width="3" height="21" fill="#00b400"/><rect x="2156.2" y="1948.5" width="3" height="11.5" fill="#00b400"/><rect x="2164.8" y="1948.5" width="3" height="11.5" fill="#00b400"/><rect x="2173.4" y="1948.5" width="3" height="11.5" fill="#00b400"/><rect x="2182.0" y="1948.5" width="3" height="11.5" fill="#00b400"/><rect x="2190.6" y="1948.5" width="3" height="11.5" fill="#00b400"/><rect x="2199.1" y="1948.5" width="3" height="11.5" fill="#00b400"/><rect x="2207.7" y="1948.5" width="3" height="11.5" fill="#00b400"/><rect x="2216.3" y="1948.5" width="3" height="11.5" fill="#00b400"/><rect x="2224.9" y="1948.5" width="3" height="11.5" fill="#00b400"/><rect x="2233.5" y="1939" width="3" height="21" fill="#00b400"/><rect x="2242.1" y="1948.5" width="3" height="11.5" fill="#00b400"/><rect x="2250.7" y="1948.5" width="3" height="11.5" fill="#00b400"/><rect x="2259.3" y="1948.5" width="3" height="11.5" fill="#00b400"/><rect x="2267.9" y="1948.5" width="3" height="11.5" fill="#00b400"/><rect x="2276.4" y="1948.5" width="3" height="11.5" fill="#00b400"/><rect x="2285.0" y="1948.5" width="3" height="11.5" fill="#00b400"/><rect x="2293.6" y="1948.5" width="3" height="11.5" fill="#00b400"/><rect x="2302.2" y="1948.5" width="3" height="11.5" fill="#00b400"/><rect x="2310.8" y="1948.5" width="3" height="11.5" fill="#00b400"/><rect x="2319.4" y="1939" width="3" height="21" fill="#00b400"/><rect x="2328.0" y="1948.5" width="3" height="11.5" fill="#00b400"/><rect x="2336.6" y="1948.5" width="3" height="11.5" fill="#00b400"/><rect x="2345.2" y="1948.5" width="3" height="11.5" fill="#00b400"/><rect x="2353.8" y="1948.5" width="3" height="11.5" fill="#00b400"/><rect x="2362.3" y="1948.5" width="3" height="11.5" fill="#00b400"/><rect x="2370.9" y="1948.5" width="3" height="11.5" fill="#00b400"/><rect x="2379.5" y="1948.5" width="3" height="11.5" fill="#00b400"/><rect x="2388.1" y="1948.5" width="3" height="11.5" fill="#00b400"/><rect x="2396.7" y="1948.5" width="3" height="11.5" fill="#00b400"/><rect x="2405.3" y="1939" width="3" height="21" fill="#00b400"/><rect x="2413.9" y="1948.5" width="3" height="11.5" fill="#00b400"/><rect x="2422.5" y="1948.5" width="3" height="11.5" fill="#00b400"/><rect x="2431.1" y="1948.5" width="3" height="11.5" fill="#00b400"/><rect x="2439.7" y="1948.5" width="3" height="11.5" fill="#00b400"/><rect x="2448.2" y="1948.5" width="3" height="11.5" fill="#00b400"/><rect x="2456.8" y="1948.5" width="3" height="11.5" fill="#00b400"/><rect x="2465.4" y="1948.5" width="3" height="11.5" fill="#00b400"/><rect x="2474.0" y="1948.5" width="3" height="11.5" fill="#00b400"/><rect x="2482.6" y="1948.5" width="3" height="11.5" fill="#00b400"/><rect x="2491.2" y="1939" width="3" height="21" fill="#00b400"/><rect x="2499.8" y="1948.5" width="3" height="11.5" fill="#00b400"/><rect x="2508.4" y="1948.5" width="3" height="11.5" fill="#00b400"/><rect x="2517.0" y="1948.5" width="3" height="11.5" fill="#00b400"/><rect x="2525.6" y="1948.5" width="3" height="11.5" fill="#00b400"/><rect x="2534.2" y="1948.5" width="3" height="11.5" fill="#00b400"/><rect x="2542.7" y="1948.5" width="3" height="11.5" fill="#00b400"/><rect x="2551.3" y="1948.5" width="3" height="11.5" fill="#00b400"/><rect x="2559.9" y="1948.5" width="3" height="11.5" fill="#00b400"/><rect x="2568.5" y="1948.5" width="3" height="11.5" fill="#00b400"/><rect x="2577.1" y="1939" width="3" height="21" fill="#00b400"/><rect x="2585.7" y="1948.5" width="3" height="11.5" fill="#00b400"/><rect x="2594.3" y="1948.5" width="3" height="11.5" fill="#00b400"/><rect x="2602.9" y="1948.5" width="3" height="11.5" fill="#00b400"/><rect x="2611.5" y="1948.5" width="3" height="11.5" fill="#00b400"/><rect x="2620.1" y="1948.5" width="3" height="11.5" fill="#00b400"/><rect x="2628.6" y="1948.5" width="3" height="11.5" fill="#00b400"/><rect x="2637.2" y="1948.5" width="3" height="11.5" fill="#00b400"/><rect x="2645.8" y="1948.5" width="3" height="11.5" fill="#00b400"/><rect x="2654.4" y="1948.5" width="3" height="11.5" fill="#00b400"/><rect x="2663.0" y="1939" width="3" height="21" fill="#00b400"/><rect x="2671.6" y="1948.5" width="3" height="11.5" fill="#00b400"/><rect x="2680.2" y="1948.5" width="3" height="11.5" fill="#00b400"/><rect x="2688.8" y="1948.5" width="3" height="11.5" fill="#00b400"/><rect x="2697.4" y="1948.5" width="3" height="11.5" fill="#00b400"/><rect x="2705.9" y="1948.5" width="3" height="11.5" fill="#00b400"/><rect x="2714.5" y="1948.5" width="3" height="11.5" fill="#00b400"/><rect x="2723.1" y="1948.5" width="3" height="11.5" fill="#00b400"/><rect x="2731.7" y="1948.5" width="3" height="11.5" fill="#00b400"/><rect x="2740.3" y="1948.5" width="3" height="11.5" fill="#00b400"/><rect x="2748.9" y="1939" width="3" height="21" fill="#00b400"/><rect x="2757.5" y="1948.5" width="3" height="11.5" fill="#00b400"/><rect x="2766.1" y="1948.5" width="3" height="11.5" fill="#00b400"/><rect x="2774.7" y="1948.5" width="3" height="11.5" fill="#00b400"/><rect x="2783.3" y="1948.5" width="3" height="11.5" fill="#00b400"/><rect x="2791.8" y="1948.5" width="3" height="11.5" fill="#00b400"/><rect x="2800.4" y="1948.5" width="3" height="11.5" fill="#00b400"/><rect x="2809.0" y="1948.5" width="3" height="11.5" fill="#00b400"/><rect x="2817.6" y="1948.5" width="3" height="11.5" fill="#00b400"/><rect x="2826.2" y="1948.5" width="3" height="11.5" fill="#00b400"/><rect x="2834.8" y="1939" width="3" height="21" fill="#00b400"/><rect x="2843.4" y="1948.5" width="3" height="11.5" fill="#00b400"/><rect x="2852.0" y="1948.5" width="3" height="11.5" fill="#00b400"/><rect x="2860.6" y="1948.5" width="3" height="11.5" fill="#00b400"/><rect x="2869.2" y="1948.5" width="3" height="11.5" fill="#00b400"/><rect x="2877.8" y="1948.5" width="3" height="11.5" fill="#00b400"/><rect x="2886.3" y="1948.5" width="3" height="11.5" fill="#00b400"/><rect x="2894.9" y="1948.5" width="3" height="11.5" fill="#00b400"/><rect x="2903.5" y="1948.5" width="3" height="11.5" fill="#00b400"/><rect x="2912.1" y="1948.5" width="3" height="11.5" fill="#00b400"/><rect x="2920.7" y="1939" width="3" height="21" fill="#00b400"/><rect x="2929.3" y="1948.5" width="3" height="11.5" fill="#00b400"/><rect x="2937.9" y="1948.5" width="3" height="11.5" fill="#00b400"/><rect x="2946.5" y="1948.5" width="3" height="11.5" fill="#00b400"/><rect x="2955.1" y="1948.5" width="3" height="11.5" fill="#00b400"/><rect x="2963.7" y="1948.5" width="3" height="11.5" fill="#00b400"/><rect x="2972.2" y="1948.5" width="3" height="11.5" fill="#00b400"/><rect x="2980.8" y="1948.5" width="3" height="11.5" fill="#00b400"/><rect x="2989.4" y="1948.5" width="3" height="11.5" fill="#00b400"/><rect x="2998.0" y="1948.5" width="3" height="11.5" fill="#00b400"/><rect x="3006.6" y="1939" width="3" height="21" fill="#00b400"/><rect x="3015.2" y="1948.5" width="3" height="11.5" fill="#00b400"/><rect x="3023.8" y="1948.5" width="3" height="11.5" fill="#00b400"/><rect x="3032.4" y="1948.5" width="3" height="11.5" fill="#00b400"/><rect x="3041.0" y="1948.5" width="3" height="11.5" fill="#00b400"/><rect x="3049.6" y="1948.5" width="3" height="11.5" fill="#00b400"/><rect x="3058.1" y="1948.5" width="3" height="11.5" fill="#00b400"/><rect x="3066.7" y="1948.5" width="3" height="11.5" fill="#00b400"/><rect x="3075.3" y="1948.5" width="3" height="11.5" fill="#00b400"/><rect x="3083.9" y="1948.5" width="3" height="11.5" fill="#00b400"/><rect x="3092.5" y="1939" width="3" height="21" fill="#00b400"/><rect x="3101.1" y="1948.5" width="3" height="11.5" fill="#00b400"/><rect x="3109.7" y="1948.5" width="3" height="11.5" fill="#00b400"/><rect x="3118.3" y="1948.5" width="3" height="11.5" fill="#00b400"/><rect x="3126.9" y="1948.5" width="3" height="11.5" fill="#00b400"/><rect x="3135.4" y="1948.5" width="3" height="11.5" fill="#00b400"/><rect x="3144.0" y="1948.5" width="3" height="11.5" fill="#00b400"/><rect x="3152.6" y="1948.5" width="3" height="11.5" fill="#00b400"/><rect x="3161.2" y="1948.5" width="3" height="11.5" fill="#00b400"/><rect x="3169.8" y="1948.5" width="3" height="11.5" fill="#00b400"/><rect x="3178.4" y="1939" width="3" height="21" fill="#00b400"/><rect x="3187.0" y="1948.5" width="3" height="11.5" fill="#00b400"/><rect x="3195.6" y="1948.5" width="3" height="11.5" fill="#00b400"/><rect x="3204.2" y="1948.5" width="3" height="11.5" fill="#00b400"/><rect x="3212.8" y="1948.5" width="3" height="11.5" fill="#00b400"/><rect x="3221.3" y="1948.5" width="3" height="11.5" fill="#00b400"/>
<g font-family="Liberation Sans" font-size="33" fill="#00c400" stroke="#00c400" stroke-width="0.9">
<text x="1422.4" y="1997" textLength="79.5" lengthAdjust="spacingAndGlyphs">2200 ns</text>
<text x="1594.2" y="1997" textLength="79.5" lengthAdjust="spacingAndGlyphs">2300 ns</text>
<text x="1766.0" y="1997" textLength="79.5" lengthAdjust="spacingAndGlyphs">2400 ns</text>
<text x="1937.8" y="1997" textLength="79.5" lengthAdjust="spacingAndGlyphs">2500 ns</text>
<text x="2109.6" y="1997" textLength="79.5" lengthAdjust="spacingAndGlyphs">2600 ns</text>
<text x="2281.4" y="1997" textLength="79.5" lengthAdjust="spacingAndGlyphs">2700 ns</text>
<text x="2453.2" y="1997" textLength="79.5" lengthAdjust="spacingAndGlyphs">2800 ns</text>
<text x="2625.0" y="1997" textLength="79.5" lengthAdjust="spacingAndGlyphs">2900 ns</text>
<text x="2796.8" y="1997" textLength="79.5" lengthAdjust="spacingAndGlyphs">3000 ns</text>
<text x="2968.6" y="1997" textLength="79.5" lengthAdjust="spacingAndGlyphs">3100 ns</text>
<text x="3140.4" y="1997" textLength="79.5" lengthAdjust="spacingAndGlyphs">3200 ns</text>
</g></g>
<clipPath id="lc"><rect x="28" y="311" width="1270" height="1623"/></clipPath>
<g font-family="Liberation Sans" font-size="33" clip-path="url(#lc)">
<text transform="translate(130.5,351.1) scale(0.743,1)" fill="#f0f0f0" stroke="#f0f0f0" stroke-width="0.7">/fir_filter_test/clk</text>
<g font-size="34" letter-spacing="7.04" fill="#f0f0f0" stroke="#f0f0f0" stroke-width="1.3"><text transform="translate(840.5,350.9) scale(0.5,1)">1</text></g>
<polygon points="88.6,340.8 104.8,318.8 104.8,331.8 98.3,340.8" fill="#94dcf6"/><polygon points="104.8,318.8 121.0,340.8 111.3,340.8 104.8,331.8" fill="#1694d6"/><polygon points="121.0,340.8 104.8,362.8 104.8,349.8 111.3,340.8" fill="#0a6a9c"/><polygon points="104.8,362.8 88.6,340.8 98.3,340.8 104.8,349.8" fill="#1a8ed2"/><polygon points="98.3,340.8 104.8,331.8 111.3,340.8 104.8,349.8" fill="#00c6f6"/>
<text transform="translate(130.5,398.9) scale(0.743,1)" fill="#f0f0f0" stroke="#f0f0f0" stroke-width="0.7">/fir_filter_test/reset_n</text>
<g font-size="34" letter-spacing="7.04" fill="#f0f0f0" stroke="#f0f0f0" stroke-width="1.3"><text transform="translate(840.5,398.8) scale(0.5,1)">1</text></g>
<polygon points="88.6,388.6 104.8,366.6 104.8,379.6 98.3,388.6" fill="#94dcf6"/><polygon points="104.8,366.6 121.0,388.6 111.3,388.6 104.8,379.6" fill="#1694d6"/><polygon points="121.0,388.6 104.8,410.6 104.8,397.6 111.3,388.6" fill="#0a6a9c"/><polygon points="104.8,410.6 88.6,388.6 98.3,388.6 104.8,397.6" fill="#1a8ed2"/><polygon points="98.3,388.6 104.8,379.6 111.3,388.6 104.8,397.6" fill="#00c6f6"/>
<text transform="translate(130.5,446.9) scale(0.743,1)" fill="#f0f0f0" stroke="#f0f0f0" stroke-width="0.7">/fir_filter_test/data_in</text>
<g font-size="34" letter-spacing="7.04" fill="#f0f0f0" stroke="#f0f0f0" stroke-width="1.3"><text transform="translate(840.5,446.7) scale(0.5,1)">00000110</text></g>
<polygon points="88.6,436.6 104.8,414.6 104.8,427.6 98.3,436.6" fill="#94dcf6"/><polygon points="104.8,414.6 121.0,436.6 111.3,436.6 104.8,427.6" fill="#1694d6"/><polygon points="121.0,436.6 104.8,458.6 104.8,445.6 111.3,436.6" fill="#0a6a9c"/><polygon points="104.8,458.6 88.6,436.6 98.3,436.6 104.8,445.6" fill="#1a8ed2"/><polygon points="98.3,436.6 104.8,427.6 111.3,436.6 104.8,445.6" fill="#00c6f6"/>
<rect x="79.5" y="437.4" width="10" height="3.2" fill="#c4c4c4"/>
<rect x="57" y="424.1" width="22.5" height="30" rx="2" fill="url(#pg)" stroke="#8890a8" stroke-width="1.5"/>
<rect x="63" y="437.7" width="11.5" height="2.8" fill="#111"/>
<rect x="67.4" y="432.1" width="2.8" height="14" fill="#111"/>
<text transform="translate(130.5,494.8) scale(0.743,1)" fill="#f0f0f0" stroke="#f0f0f0" stroke-width="0.7">/fir_filter_test/din_valid</text>
<g font-size="34" letter-spacing="7.04" fill="#f0f0f0" stroke="#f0f0f0" stroke-width="1.3"><text transform="translate(840.5,494.6) scale(0.5,1)">0</text></g>
<polygon points="88.6,484.4 104.8,462.4 104.8,475.4 98.3,484.4" fill="#94dcf6"/><polygon points="104.8,462.4 121.0,484.4 111.3,484.4 104.8,475.4" fill="#1694d6"/><polygon points="121.0,484.4 104.8,506.4 104.8,493.4 111.3,484.4" fill="#0a6a9c"/><polygon points="104.8,506.4 88.6,484.4 98.3,484.4 104.8,493.4" fill="#1a8ed2"/><polygon points="98.3,484.4 104.8,475.4 111.3,484.4 104.8,493.4" fill="#00c6f6"/>
<text transform="translate(130.5,542.6) scale(0.743,1)" fill="#f0f0f0" stroke="#f0f0f0" stroke-width="0.7">/fir_filter_test/coeff_addr</text>
<g font-size="34" letter-spacing="7.04" fill="#f0f0f0" stroke="#f0f0f0" stroke-width="1.3"><text transform="translate(840.5,542.4) scale(0.5,1)">00000</text></g>
<polygon points="88.6,532.3 104.8,510.3 104.8,523.3 98.3,532.3" fill="#94dcf6"/><polygon points="104.8,510.3 121.0,532.3 111.3,532.3 104.8,523.3" fill="#1694d6"/><polygon points="121.0,532.3 104.8,554.3 104.8,541.3 111.3,532.3" fill="#0a6a9c"/><polygon points="104.8,554.3 88.6,532.3 98.3,532.3 104.8,541.3" fill="#1a8ed2"/><polygon points="98.3,532.3 104.8,523.3 111.3,532.3 104.8,541.3" fill="#00c6f6"/>
<rect x="79.5" y="533.2" width="10" height="3.2" fill="#c4c4c4"/>
<rect x="57" y="519.8" width="22.5" height="30" rx="2" fill="url(#pg)" stroke="#8890a8" stroke-width="1.5"/>
<rect x="63" y="533.4" width="11.5" height="2.8" fill="#111"/>
<rect x="67.4" y="527.8" width="2.8" height="14" fill="#111"/>
<text transform="translate(130.5,590.5) scale(0.743,1)" fill="#f0f0f0" stroke="#f0f0f0" stroke-width="0.7">/fir_filter_test/coeff_we</text>
<g font-size="34" letter-spacing="7.04" fill="#f0f0f0" stroke="#f0f0f0" stroke-width="1.3"><text transform="translate(840.5,590.4) scale(0.5,1)">0</text></g>
<polygon points="88.6,580.2 104.8,558.2 104.8,571.2 98.3,580.2" fill="#94dcf6"/><polygon points="104.8,558.2 121.0,580.2 111.3,580.2 104.8,571.2" fill="#1694d6"/><polygon points="121.0,580.2 104.8,602.2 104.8,589.2 111.3,580.2" fill="#0a6a9c"/><polygon points="104.8,602.2 88.6,580.2 98.3,580.2 104.8,589.2" fill="#1a8ed2"/><polygon points="98.3,580.2 104.8,571.2 111.3,580.2 104.8,589.2" fill="#00c6f6"/>
<text transform="translate(130.5,638.4) scale(0.743,1)" fill="#f0f0f0" stroke="#f0f0f0" stroke-width="0.7">/fir_filter_test/coeff_data</text>
<g font-size="34" letter-spacing="7.04" fill="#f0f0f0" stroke="#f0f0f0" stroke-width="1.3"><text transform="translate(840.5,638.2) scale(0.5,1)">00000000</text></g>
<polygon points="88.6,628.1 104.8,606.1 104.8,619.1 98.3,628.1" fill="#94dcf6"/><polygon points="104.8,606.1 121.0,628.1 111.3,628.1 104.8,619.1" fill="#1694d6"/><polygon points="121.0,628.1 104.8,650.1 104.8,637.1 111.3,628.1" fill="#0a6a9c"/><polygon points="104.8,650.1 88.6,628.1 98.3,628.1 104.8,637.1" fill="#1a8ed2"/><polygon points="98.3,628.1 104.8,619.1 111.3,628.1 104.8,637.1" fill="#00c6f6"/>
<rect x="79.5" y="629.0" width="10" height="3.2" fill="#c4c4c4"/>
<rect x="57" y="615.6" width="22.5" height="30" rx="2" fill="url(#pg)" stroke="#8890a8" stroke-width="1.5"/>
<rect x="63" y="629.2" width="11.5" height="2.8" fill="#111"/>
<rect x="67.4" y="623.6" width="2.8" height="14" fill="#111"/>
<text transform="translate(130.5,686.3) scale(0.743,1)" fill="#101010" stroke="#101010" stroke-width="0.7">/fir_filter_test/data_out</text>
<g font-size="34" letter-spacing="7.04" fill="#101010" stroke="#101010" stroke-width="0.9"><text transform="translate(840.5,686.1) scale(0.5,1)">0000001001110110</text></g>
<polygon points="88.6,676.0 104.8,654.0 104.8,667.0 98.3,676.0" fill="#94dcf6"/><polygon points="104.8,654.0 121.0,676.0 111.3,676.0 104.8,667.0" fill="#1694d6"/><polygon points="121.0,676.0 104.8,698.0 104.8,685.0 111.3,676.0" fill="#0a6a9c"/><polygon points="104.8,698.0 88.6,676.0 98.3,676.0 104.8,685.0" fill="#1a8ed2"/><polygon points="98.3,676.0 104.8,667.0 111.3,676.0 104.8,685.0" fill="#00c6f6"/>
<rect x="79.5" y="676.9" width="10" height="3.2" fill="#c4c4c4"/>
<rect x="57" y="663.5" width="22.5" height="30" rx="2" fill="url(#pg)" stroke="#8890a8" stroke-width="1.5"/>
<rect x="63" y="677.1" width="11.5" height="2.8" fill="#111"/>
<rect x="67.4" y="671.5" width="2.8" height="14" fill="#111"/>
<text transform="translate(130.5,734.2) scale(0.743,1)" fill="#f0f0f0" stroke="#f0f0f0" stroke-width="0.7">/fir_filter_test/dout_valid</text>
<text transform="translate(840.5,734.6) scale(0.7,1)" fill="#f0f0f0" stroke="#f0f0f0" stroke-width="0.8" font-size="34">St1</text>
<polygon points="88.6,723.9 104.8,701.9 104.8,714.9 98.3,723.9" fill="#94dcf6"/><polygon points="104.8,701.9 121.0,723.9 111.3,723.9 104.8,714.9" fill="#1694d6"/><polygon points="121.0,723.9 104.8,745.9 104.8,732.9 111.3,723.9" fill="#0a6a9c"/><polygon points="104.8,745.9 88.6,723.9 98.3,723.9 104.8,732.9" fill="#1a8ed2"/><polygon points="98.3,723.9 104.8,714.9 111.3,723.9 104.8,732.9" fill="#00c6f6"/>
<text transform="translate(130.5,782.1) scale(0.743,1)" fill="#f0f0f0" stroke="#f0f0f0" stroke-width="0.7">/fir_filter_test/u_fir_filter_test/clk</text>
<text transform="translate(840.5,782.5) scale(0.7,1)" fill="#f0f0f0" stroke="#f0f0f0" stroke-width="0.8" font-size="34">St1</text>
<polygon points="88.6,771.8 104.8,749.8 104.8,762.8 98.3,771.8" fill="#94dcf6"/><polygon points="104.8,749.8 121.0,771.8 111.3,771.8 104.8,762.8" fill="#1694d6"/><polygon points="121.0,771.8 104.8,793.8 104.8,780.8 111.3,771.8" fill="#0a6a9c"/><polygon points="104.8,793.8 88.6,771.8 98.3,771.8 104.8,780.8" fill="#1a8ed2"/><polygon points="98.3,771.8 104.8,762.8 111.3,771.8 104.8,780.8" fill="#00c6f6"/>
<text transform="translate(130.5,830.0) scale(0.743,1)" fill="#f0f0f0" stroke="#f0f0f0" stroke-width="0.7">/fir_filter_test/u_fir_filter_test/reset_n</text>
<text transform="translate(840.5,830.5) scale(0.7,1)" fill="#f0f0f0" stroke="#f0f0f0" stroke-width="0.8" font-size="34">St1</text>
<polygon points="88.6,819.8 104.8,797.8 104.8,810.8 98.3,819.8" fill="#94dcf6"/><polygon points="104.8,797.8 121.0,819.8 111.3,819.8 104.8,810.8" fill="#1694d6"/><polygon points="121.0,819.8 104.8,841.8 104.8,828.8 111.3,819.8" fill="#0a6a9c"/><polygon points="104.8,841.8 88.6,819.8 98.3,819.8 104.8,828.8" fill="#1a8ed2"/><polygon points="98.3,819.8 104.8,810.8 111.3,819.8 104.8,828.8" fill="#00c6f6"/>
<text transform="translate(130.5,877.9) scale(0.743,1)" fill="#f0f0f0" stroke="#f0f0f0" stroke-width="0.7">/fir_filter_test/u_fir_filter_test/data_in</text>
<g font-size="34" letter-spacing="7.04" fill="#f0f0f0" stroke="#f0f0f0" stroke-width="1.3"><text transform="translate(840.5,877.7) scale(0.5,1)">00000110</text></g>
<polygon points="88.6,867.6 104.8,845.6 104.8,858.6 98.3,867.6" fill="#94dcf6"/><polygon points="104.8,845.6 121.0,867.6 111.3,867.6 104.8,858.6" fill="#1694d6"/><polygon points="121.0,867.6 104.8,889.6 104.8,876.6 111.3,867.6" fill="#0a6a9c"/><polygon points="104.8,889.6 88.6,867.6 98.3,867.6 104.8,876.6" fill="#1a8ed2"/><polygon points="98.3,867.6 104.8,858.6 111.3,867.6 104.8,876.6" fill="#00c6f6"/>
<rect x="79.5" y="868.5" width="10" height="3.2" fill="#c4c4c4"/>
<rect x="57" y="855.1" width="22.5" height="30" rx="2" fill="url(#pg)" stroke="#8890a8" stroke-width="1.5"/>
<rect x="63" y="868.7" width="11.5" height="2.8" fill="#111"/>
<rect x="67.4" y="863.1" width="2.8" height="14" fill="#111"/>
<text transform="translate(130.5,925.8) scale(0.743,1)" fill="#f0f0f0" stroke="#f0f0f0" stroke-width="0.7">/fir_filter_test/u_fir_filter_test/din_valid</text>
<text transform="translate(840.5,926.2) scale(0.7,1)" fill="#f0f0f0" stroke="#f0f0f0" stroke-width="0.8" font-size="34">St0</text>
<polygon points="88.6,915.5 104.8,893.5 104.8,906.5 98.3,915.5" fill="#94dcf6"/><polygon points="104.8,893.5 121.0,915.5 111.3,915.5 104.8,906.5" fill="#1694d6"/><polygon points="121.0,915.5 104.8,937.5 104.8,924.5 111.3,915.5" fill="#0a6a9c"/><polygon points="104.8,937.5 88.6,915.5 98.3,915.5 104.8,924.5" fill="#1a8ed2"/><polygon points="98.3,915.5 104.8,906.5 111.3,915.5 104.8,924.5" fill="#00c6f6"/>
<text transform="translate(130.5,973.7) scale(0.743,1)" fill="#f0f0f0" stroke="#f0f0f0" stroke-width="0.7">/fir_filter_test/u_fir_filter_test/coeff_addr</text>
<g font-size="34" letter-spacing="7.04" fill="#f0f0f0" stroke="#f0f0f0" stroke-width="1.3"><text transform="translate(840.5,973.5) scale(0.5,1)">00000</text></g>
<polygon points="88.6,963.4 104.8,941.4 104.8,954.4 98.3,963.4" fill="#94dcf6"/><polygon points="104.8,941.4 121.0,963.4 111.3,963.4 104.8,954.4" fill="#1694d6"/><polygon points="121.0,963.4 104.8,985.4 104.8,972.4 111.3,963.4" fill="#0a6a9c"/><polygon points="104.8,985.4 88.6,963.4 98.3,963.4 104.8,972.4" fill="#1a8ed2"/><polygon points="98.3,963.4 104.8,954.4 111.3,963.4 104.8,972.4" fill="#00c6f6"/>
<rect x="79.5" y="964.3" width="10" height="3.2" fill="#c4c4c4"/>
<rect x="57" y="950.9" width="22.5" height="30" rx="2" fill="url(#pg)" stroke="#8890a8" stroke-width="1.5"/>
<rect x="63" y="964.5" width="11.5" height="2.8" fill="#111"/>
<rect x="67.4" y="958.9" width="2.8" height="14" fill="#111"/>
<text transform="translate(130.5,1021.6) scale(0.743,1)" fill="#f0f0f0" stroke="#f0f0f0" stroke-width="0.7">/fir_filter_test/u_fir_filter_test/coeff_we</text>
<text transform="translate(840.5,1022.0) scale(0.7,1)" fill="#f0f0f0" stroke="#f0f0f0" stroke-width="0.8" font-size="34">St0</text>
<polygon points="88.6,1011.3 104.8,989.3 104.8,1002.3 98.3,1011.3" fill="#94dcf6"/><polygon points="104.8,989.3 121.0,1011.3 111.3,1011.3 104.8,1002.3" fill="#1694d6"/><polygon points="121.0,1011.3 104.8,1033.3 104.8,1020.3 111.3,1011.3" fill="#0a6a9c"/><polygon points="104.8,1033.3 88.6,1011.3 98.3,1011.3 104.8,1020.3" fill="#1a8ed2"/><polygon points="98.3,1011.3 104.8,1002.3 111.3,1011.3 104.8,1020.3" fill="#00c6f6"/>
<text transform="translate(130.5,1069.5) scale(0.743,1)" fill="#f0f0f0" stroke="#f0f0f0" stroke-width="0.7">/fir_filter_test/u_fir_filter_test/coeff_data</text>
<g font-size="34" letter-spacing="7.04" fill="#f0f0f0" stroke="#f0f0f0" stroke-width="1.3"><text transform="translate(840.5,1069.3) scale(0.5,1)">00000000</text></g>
<polygon points="88.6,1059.2 104.8,1037.2 104.8,1050.2 98.3,1059.2" fill="#94dcf6"/><polygon points="104.8,1037.2 121.0,1059.2 111.3,1059.2 104.8,1050.2" fill="#1694d6"/><polygon points="121.0,1059.2 104.8,1081.2 104.8,1068.2 111.3,1059.2" fill="#0a6a9c"/><polygon points="104.8,1081.2 88.6,1059.2 98.3,1059.2 104.8,1068.2" fill="#1a8ed2"/><polygon points="98.3,1059.2 104.8,1050.2 111.3,1059.2 104.8,1068.2" fill="#00c6f6"/>
<rect x="79.5" y="1060.2" width="10" height="3.2" fill="#c4c4c4"/>
<rect x="57" y="1046.8" width="22.5" height="30" rx="2" fill="url(#pg)" stroke="#8890a8" stroke-width="1.5"/>
<rect x="63" y="1060.3" width="11.5" height="2.8" fill="#111"/>
<rect x="67.4" y="1054.8" width="2.8" height="14" fill="#111"/>
<text transform="translate(130.5,1117.4) scale(0.743,1)" fill="#f0f0f0" stroke="#f0f0f0" stroke-width="0.7">/fir_filter_test/u_fir_filter_test/data_out</text>
<g font-size="34" letter-spacing="7.04" fill="#f0f0f0" stroke="#f0f0f0" stroke-width="1.3"><text transform="translate(840.5,1117.2) scale(0.5,1)">0000001001110110</text></g>
<polygon points="88.6,1107.1 104.8,1085.1 104.8,1098.1 98.3,1107.1" fill="#94dcf6"/><polygon points="104.8,1085.1 121.0,1107.1 111.3,1107.1 104.8,1098.1" fill="#1694d6"/><polygon points="121.0,1107.1 104.8,1129.1 104.8,1116.1 111.3,1107.1" fill="#0a6a9c"/><polygon points="104.8,1129.1 88.6,1107.1 98.3,1107.1 104.8,1116.1" fill="#1a8ed2"/><polygon points="98.3,1107.1 104.8,1098.1 111.3,1107.1 104.8,1116.1" fill="#00c6f6"/>
<rect x="79.5" y="1108.0" width="10" height="3.2" fill="#c4c4c4"/>
<rect x="57" y="1094.6" width="22.5" height="30" rx="2" fill="url(#pg)" stroke="#8890a8" stroke-width="1.5"/>
<rect x="63" y="1108.2" width="11.5" height="2.8" fill="#111"/>
<rect x="67.4" y="1102.6" width="2.8" height="14" fill="#111"/>
<text transform="translate(130.5,1165.3) scale(0.743,1)" fill="#f0f0f0" stroke="#f0f0f0" stroke-width="0.7">/fir_filter_test/u_fir_filter_test/dout_valid</text>
<text transform="translate(840.5,1165.8) scale(0.7,1)" fill="#f0f0f0" stroke="#f0f0f0" stroke-width="0.8" font-size="34">St1</text>
<polygon points="88.6,1155.0 104.8,1133.0 104.8,1146.0 98.3,1155.0" fill="#94dcf6"/><polygon points="104.8,1133.0 121.0,1155.0 111.3,1155.0 104.8,1146.0" fill="#1694d6"/><polygon points="121.0,1155.0 104.8,1177.0 104.8,1164.0 111.3,1155.0" fill="#0a6a9c"/><polygon points="104.8,1177.0 88.6,1155.0 98.3,1155.0 104.8,1164.0" fill="#1a8ed2"/><polygon points="98.3,1155.0 104.8,1146.0 111.3,1155.0 104.8,1164.0" fill="#00c6f6"/>
<text transform="translate(130.5,1213.2) scale(0.743,1)" fill="#f0f0f0" stroke="#f0f0f0" stroke-width="0.7">/fir_filter_test/u_fir_filter_test/rst_cnt</text>
<text transform="translate(840.5,1213.6) scale(0.7,1)" fill="#f0f0f0" stroke="#f0f0f0" stroke-width="0.8" font-size="34">St1</text>
<polygon points="88.6,1202.9 104.8,1180.9 104.8,1193.9 98.3,1202.9" fill="#94dcf6"/><polygon points="104.8,1180.9 121.0,1202.9 111.3,1202.9 104.8,1193.9" fill="#1694d6"/><polygon points="121.0,1202.9 104.8,1224.9 104.8,1211.9 111.3,1202.9" fill="#0a6a9c"/><polygon points="104.8,1224.9 88.6,1202.9 98.3,1202.9 104.8,1211.9" fill="#1a8ed2"/><polygon points="98.3,1202.9 104.8,1193.9 111.3,1202.9 104.8,1211.9" fill="#00c6f6"/>
<text transform="translate(130.5,1261.1) scale(0.743,1)" fill="#f0f0f0" stroke="#f0f0f0" stroke-width="0.7">/fir_filter_test/u_fir_filter_test/adv_cnt</text>
<text transform="translate(840.5,1261.5) scale(0.7,1)" fill="#f0f0f0" stroke="#f0f0f0" stroke-width="0.8" font-size="34">St1</text>
<polygon points="88.6,1250.8 104.8,1228.8 104.8,1241.8 98.3,1250.8" fill="#94dcf6"/><polygon points="104.8,1228.8 121.0,1250.8 111.3,1250.8 104.8,1241.8" fill="#1694d6"/><polygon points="121.0,1250.8 104.8,1272.8 104.8,1259.8 111.3,1250.8" fill="#0a6a9c"/><polygon points="104.8,1272.8 88.6,1250.8 98.3,1250.8 104.8,1259.8" fill="#1a8ed2"/><polygon points="98.3,1250.8 104.8,1241.8 111.3,1250.8 104.8,1259.8" fill="#00c6f6"/>
<text transform="translate(130.5,1309.0) scale(0.743,1)" fill="#f0f0f0" stroke="#f0f0f0" stroke-width="0.7">/fir_filter_test/u_fir_filter_test/load</text>
<text transform="translate(840.5,1309.5) scale(0.7,1)" fill="#f0f0f0" stroke="#f0f0f0" stroke-width="0.8" font-size="34">St0</text>
<polygon points="88.6,1298.8 104.8,1276.8 104.8,1289.8 98.3,1298.8" fill="#94dcf6"/><polygon points="104.8,1276.8 121.0,1298.8 111.3,1298.8 104.8,1289.8" fill="#1694d6"/><polygon points="121.0,1298.8 104.8,1320.8 104.8,1307.8 111.3,1298.8" fill="#0a6a9c"/><polygon points="104.8,1320.8 88.6,1298.8 98.3,1298.8 104.8,1307.8" fill="#1a8ed2"/><polygon points="98.3,1298.8 104.8,1289.8 111.3,1298.8 104.8,1307.8" fill="#00c6f6"/>
<text transform="translate(130.5,1356.9) scale(0.743,1)" fill="#f0f0f0" stroke="#f0f0f0" stroke-width="0.7">/fir_filter_test/u_fir_filter_test/load_cnt</text>
<g font-size="34" letter-spacing="7.04" fill="#f0f0f0" stroke="#f0f0f0" stroke-width="1.3"><text transform="translate(840.5,1356.7) scale(0.5,1)">00000</text></g>
<polygon points="88.6,1346.6 104.8,1324.6 104.8,1337.6 98.3,1346.6" fill="#94dcf6"/><polygon points="104.8,1324.6 121.0,1346.6 111.3,1346.6 104.8,1337.6" fill="#1694d6"/><polygon points="121.0,1346.6 104.8,1368.6 104.8,1355.6 111.3,1346.6" fill="#0a6a9c"/><polygon points="104.8,1368.6 88.6,1346.6 98.3,1346.6 104.8,1355.6" fill="#1a8ed2"/><polygon points="98.3,1346.6 104.8,1337.6 111.3,1346.6 104.8,1355.6" fill="#00c6f6"/>
<rect x="79.5" y="1347.5" width="10" height="3.2" fill="#c4c4c4"/>
<rect x="57" y="1334.1" width="22.5" height="30" rx="2" fill="url(#pg)" stroke="#8890a8" stroke-width="1.5"/>
<rect x="63" y="1347.7" width="11.5" height="2.8" fill="#111"/>
<rect x="67.4" y="1342.1" width="2.8" height="14" fill="#111"/>
<text transform="translate(130.5,1404.8) scale(0.743,1)" fill="#f0f0f0" stroke="#f0f0f0" stroke-width="0.7">/fir_filter_test/u_fir_filter_test/incr_cnt</text>
<g font-size="34" letter-spacing="7.04" fill="#f0f0f0" stroke="#f0f0f0" stroke-width="1.3"><text transform="translate(840.5,1404.6) scale(0.5,1)">00001</text></g>
<polygon points="88.6,1394.5 104.8,1372.5 104.8,1385.5 98.3,1394.5" fill="#94dcf6"/><polygon points="104.8,1372.5 121.0,1394.5 111.3,1394.5 104.8,1385.5" fill="#1694d6"/><polygon points="121.0,1394.5 104.8,1416.5 104.8,1403.5 111.3,1394.5" fill="#0a6a9c"/><polygon points="104.8,1416.5 88.6,1394.5 98.3,1394.5 104.8,1403.5" fill="#1a8ed2"/><polygon points="98.3,1394.5 104.8,1385.5 111.3,1394.5 104.8,1403.5" fill="#00c6f6"/>
<rect x="79.5" y="1395.5" width="10" height="3.2" fill="#c4c4c4"/>
<rect x="57" y="1382.0" width="22.5" height="30" rx="2" fill="url(#pg)" stroke="#8890a8" stroke-width="1.5"/>
<rect x="63" y="1395.6" width="11.5" height="2.8" fill="#111"/>
<rect x="67.4" y="1390.0" width="2.8" height="14" fill="#111"/>
<text transform="translate(130.5,1452.8) scale(0.743,1)" fill="#f0f0f0" stroke="#f0f0f0" stroke-width="0.7">/fir_filter_test/u_fir_filter_test/cnt</text>
<g font-size="34" letter-spacing="7.04" fill="#f0f0f0" stroke="#f0f0f0" stroke-width="1.3"><text transform="translate(840.5,1452.5) scale(0.5,1)">00011</text></g>
<polygon points="88.6,1442.5 104.8,1420.5 104.8,1433.5 98.3,1442.5" fill="#94dcf6"/><polygon points="104.8,1420.5 121.0,1442.5 111.3,1442.5 104.8,1433.5" fill="#1694d6"/><polygon points="121.0,1442.5 104.8,1464.5 104.8,1451.5 111.3,1442.5" fill="#0a6a9c"/><polygon points="104.8,1464.5 88.6,1442.5 98.3,1442.5 104.8,1451.5" fill="#1a8ed2"/><polygon points="98.3,1442.5 104.8,1433.5 111.3,1442.5 104.8,1451.5" fill="#00c6f6"/>
<rect x="79.5" y="1443.4" width="10" height="3.2" fill="#c4c4c4"/>
<rect x="57" y="1430.0" width="22.5" height="30" rx="2" fill="url(#pg)" stroke="#8890a8" stroke-width="1.5"/>
<rect x="63" y="1443.5" width="11.5" height="2.8" fill="#111"/>
<rect x="67.4" y="1438.0" width="2.8" height="14" fill="#111"/>
<text transform="translate(130.5,1500.6) scale(0.743,1)" fill="#f0f0f0" stroke="#f0f0f0" stroke-width="0.7">/fir_filter_test/u_fir_filter_test/coeff_rd_en</text>
<text transform="translate(840.5,1501.0) scale(0.7,1)" fill="#f0f0f0" stroke="#f0f0f0" stroke-width="0.8" font-size="34">St1</text>
<polygon points="88.6,1490.3 104.8,1468.3 104.8,1481.3 98.3,1490.3" fill="#94dcf6"/><polygon points="104.8,1468.3 121.0,1490.3 111.3,1490.3 104.8,1481.3" fill="#1694d6"/><polygon points="121.0,1490.3 104.8,1512.3 104.8,1499.3 111.3,1490.3" fill="#0a6a9c"/><polygon points="104.8,1512.3 88.6,1490.3 98.3,1490.3 104.8,1499.3" fill="#1a8ed2"/><polygon points="98.3,1490.3 104.8,1481.3 111.3,1490.3 104.8,1499.3" fill="#00c6f6"/>
<text transform="translate(130.5,1548.5) scale(0.743,1)" fill="#f0f0f0" stroke="#f0f0f0" stroke-width="0.7">/fir_filter_test/u_fir_filter_test/coeff_rd_addr</text>
<g font-size="34" letter-spacing="7.04" fill="#f0f0f0" stroke="#f0f0f0" stroke-width="1.3"><text transform="translate(840.5,1548.3) scale(0.5,1)">00011</text></g>
<polygon points="88.6,1538.2 104.8,1516.2 104.8,1529.2 98.3,1538.2" fill="#94dcf6"/><polygon points="104.8,1516.2 121.0,1538.2 111.3,1538.2 104.8,1529.2" fill="#1694d6"/><polygon points="121.0,1538.2 104.8,1560.2 104.8,1547.2 111.3,1538.2" fill="#0a6a9c"/><polygon points="104.8,1560.2 88.6,1538.2 98.3,1538.2 104.8,1547.2" fill="#1a8ed2"/><polygon points="98.3,1538.2 104.8,1529.2 111.3,1538.2 104.8,1547.2" fill="#00c6f6"/>
<rect x="79.5" y="1539.2" width="10" height="3.2" fill="#c4c4c4"/>
<rect x="57" y="1525.8" width="22.5" height="30" rx="2" fill="url(#pg)" stroke="#8890a8" stroke-width="1.5"/>
<rect x="63" y="1539.3" width="11.5" height="2.8" fill="#111"/>
<rect x="67.4" y="1533.8" width="2.8" height="14" fill="#111"/>
<text transform="translate(130.5,1596.4) scale(0.743,1)" fill="#f0f0f0" stroke="#f0f0f0" stroke-width="0.7">/fir_filter_test/u_fir_filter_test/coeff_out_data</text>
<g font-size="34" letter-spacing="7.04" fill="#f0f0f0" stroke="#f0f0f0" stroke-width="1.3"><text transform="translate(840.5,1596.2) scale(0.5,1)">01000010</text></g>
<polygon points="88.6,1586.1 104.8,1564.1 104.8,1577.1 98.3,1586.1" fill="#94dcf6"/><polygon points="104.8,1564.1 121.0,1586.1 111.3,1586.1 104.8,1577.1" fill="#1694d6"/><polygon points="121.0,1586.1 104.8,1608.1 104.8,1595.1 111.3,1586.1" fill="#0a6a9c"/><polygon points="104.8,1608.1 88.6,1586.1 98.3,1586.1 104.8,1595.1" fill="#1a8ed2"/><polygon points="98.3,1586.1 104.8,1577.1 111.3,1586.1 104.8,1595.1" fill="#00c6f6"/>
<rect x="79.5" y="1587.0" width="10" height="3.2" fill="#c4c4c4"/>
<rect x="57" y="1573.6" width="22.5" height="30" rx="2" fill="url(#pg)" stroke="#8890a8" stroke-width="1.5"/>
<rect x="63" y="1587.2" width="11.5" height="2.8" fill="#111"/>
<rect x="67.4" y="1581.6" width="2.8" height="14" fill="#111"/>
<text transform="translate(130.5,1644.3) scale(0.743,1)" fill="#f0f0f0" stroke="#f0f0f0" stroke-width="0.7">/fir_filter_test/u_fir_filter_test/mac_in_n0</text>
<g font-size="34" letter-spacing="7.04" fill="#f0f0f0" stroke="#f0f0f0" stroke-width="1.3"><text transform="translate(840.5,1644.1) scale(0.5,1)">00000000</text></g>
<polygon points="88.6,1634.0 104.8,1612.0 104.8,1625.0 98.3,1634.0" fill="#94dcf6"/><polygon points="104.8,1612.0 121.0,1634.0 111.3,1634.0 104.8,1625.0" fill="#1694d6"/><polygon points="121.0,1634.0 104.8,1656.0 104.8,1643.0 111.3,1634.0" fill="#0a6a9c"/><polygon points="104.8,1656.0 88.6,1634.0 98.3,1634.0 104.8,1643.0" fill="#1a8ed2"/><polygon points="98.3,1634.0 104.8,1625.0 111.3,1634.0 104.8,1643.0" fill="#00c6f6"/>
<rect x="79.5" y="1635.0" width="10" height="3.2" fill="#c4c4c4"/>
<rect x="57" y="1621.5" width="22.5" height="30" rx="2" fill="url(#pg)" stroke="#8890a8" stroke-width="1.5"/>
<rect x="63" y="1635.1" width="11.5" height="2.8" fill="#111"/>
<rect x="67.4" y="1629.5" width="2.8" height="14" fill="#111"/>
<text transform="translate(130.5,1692.2) scale(0.743,1)" fill="#f0f0f0" stroke="#f0f0f0" stroke-width="0.7">/fir_filter_test/u_fir_filter_test/mac_in_n1</text>
<g font-size="34" letter-spacing="7.04" fill="#f0f0f0" stroke="#f0f0f0" stroke-width="1.3"><text transform="translate(840.5,1692.0) scale(0.5,1)">01000010</text></g>
<polygon points="88.6,1682.0 104.8,1660.0 104.8,1673.0 98.3,1682.0" fill="#94dcf6"/><polygon points="104.8,1660.0 121.0,1682.0 111.3,1682.0 104.8,1673.0" fill="#1694d6"/><polygon points="121.0,1682.0 104.8,1704.0 104.8,1691.0 111.3,1682.0" fill="#0a6a9c"/><polygon points="104.8,1704.0 88.6,1682.0 98.3,1682.0 104.8,1691.0" fill="#1a8ed2"/><polygon points="98.3,1682.0 104.8,1673.0 111.3,1682.0 104.8,1691.0" fill="#00c6f6"/>
<rect x="79.5" y="1682.9" width="10" height="3.2" fill="#c4c4c4"/>
<rect x="57" y="1669.5" width="22.5" height="30" rx="2" fill="url(#pg)" stroke="#8890a8" stroke-width="1.5"/>
<rect x="63" y="1683.0" width="11.5" height="2.8" fill="#111"/>
<rect x="67.4" y="1677.5" width="2.8" height="14" fill="#111"/>
<text transform="translate(130.5,1740.1) scale(0.743,1)" fill="#f0f0f0" stroke="#f0f0f0" stroke-width="0.7">/fir_filter_test/u_fir_filter_test/mac_out_valid</text>
<text transform="translate(840.5,1740.5) scale(0.7,1)" fill="#f0f0f0" stroke="#f0f0f0" stroke-width="0.8" font-size="34">St1</text>
<polygon points="88.6,1729.8 104.8,1707.8 104.8,1720.8 98.3,1729.8" fill="#94dcf6"/><polygon points="104.8,1707.8 121.0,1729.8 111.3,1729.8 104.8,1720.8" fill="#1694d6"/><polygon points="121.0,1729.8 104.8,1751.8 104.8,1738.8 111.3,1729.8" fill="#0a6a9c"/><polygon points="104.8,1751.8 88.6,1729.8 98.3,1729.8 104.8,1738.8" fill="#1a8ed2"/><polygon points="98.3,1729.8 104.8,1720.8 111.3,1729.8 104.8,1738.8" fill="#00c6f6"/>
<text transform="translate(130.5,1788.0) scale(0.743,1)" fill="#f0f0f0" stroke="#f0f0f0" stroke-width="0.7">/fir_filter_test/u_fir_filter_test/mac_out</text>
<g font-size="34" letter-spacing="7.04" fill="#f0f0f0" stroke="#f0f0f0" stroke-width="1.3"><text transform="translate(840.5,1787.8) scale(0.5,1)">0000001001110110</text></g>
<polygon points="88.6,1777.8 104.8,1755.8 104.8,1768.8 98.3,1777.8" fill="#94dcf6"/><polygon points="104.8,1755.8 121.0,1777.8 111.3,1777.8 104.8,1768.8" fill="#1694d6"/><polygon points="121.0,1777.8 104.8,1799.8 104.8,1786.8 111.3,1777.8" fill="#0a6a9c"/><polygon points="104.8,1799.8 88.6,1777.8 98.3,1777.8 104.8,1786.8" fill="#1a8ed2"/><polygon points="98.3,1777.8 104.8,1768.8 111.3,1777.8 104.8,1786.8" fill="#00c6f6"/>
<rect x="79.5" y="1778.7" width="10" height="3.2" fill="#c4c4c4"/>
<rect x="57" y="1765.2" width="22.5" height="30" rx="2" fill="url(#pg)" stroke="#8890a8" stroke-width="1.5"/>
<rect x="63" y="1778.8" width="11.5" height="2.8" fill="#111"/>
<rect x="67.4" y="1773.2" width="2.8" height="14" fill="#111"/>
<text transform="translate(130.5,1835.9) scale(0.743,1)" fill="#f0f0f0" stroke="#f0f0f0" stroke-width="0.7">/fir_filter_test/u_fir_filter_test/cnt_en</text>
<g font-size="34" letter-spacing="7.04" fill="#f0f0f0" stroke="#f0f0f0" stroke-width="1.3"><text transform="translate(840.5,1835.7) scale(0.5,1)">1</text></g>
<polygon points="88.6,1825.6 104.8,1803.6 104.8,1816.6 98.3,1825.6" fill="#94dcf6"/><polygon points="104.8,1803.6 121.0,1825.6 111.3,1825.6 104.8,1816.6" fill="#1694d6"/><polygon points="121.0,1825.6 104.8,1847.6 104.8,1834.6 111.3,1825.6" fill="#0a6a9c"/><polygon points="104.8,1847.6 88.6,1825.6 98.3,1825.6 104.8,1834.6" fill="#1a8ed2"/><polygon points="98.3,1825.6 104.8,1816.6 111.3,1825.6 104.8,1834.6" fill="#00c6f6"/>
<text transform="translate(130.5,1883.8) scale(0.743,1)" fill="#f0f0f0" stroke="#f0f0f0" stroke-width="0.7">/fir_filter_test/u_fir_filter_test/din_reg1</text>
<g font-size="34" letter-spacing="7.04" fill="#f0f0f0" stroke="#f0f0f0" stroke-width="1.3"><text transform="translate(840.5,1883.6) scale(0.5,1)">00000110</text></g>
<polygon points="88.6,1873.5 104.8,1851.5 104.8,1864.5 98.3,1873.5" fill="#94dcf6"/><polygon points="104.8,1851.5 121.0,1873.5 111.3,1873.5 104.8,1864.5" fill="#1694d6"/><polygon points="121.0,1873.5 104.8,1895.5 104.8,1882.5 111.3,1873.5" fill="#0a6a9c"/><polygon points="104.8,1895.5 88.6,1873.5 98.3,1873.5 104.8,1882.5" fill="#1a8ed2"/><polygon points="98.3,1873.5 104.8,1864.5 111.3,1873.5 104.8,1882.5" fill="#00c6f6"/>
<rect x="79.5" y="1874.5" width="10" height="3.2" fill="#c4c4c4"/>
<rect x="57" y="1861.0" width="22.5" height="30" rx="2" fill="url(#pg)" stroke="#8890a8" stroke-width="1.5"/>
<rect x="63" y="1874.6" width="11.5" height="2.8" fill="#111"/>
<rect x="67.4" y="1869.0" width="2.8" height="14" fill="#111"/>
<text transform="translate(130.5,1931.8) scale(0.743,1)" fill="#f0f0f0" stroke="#f0f0f0" stroke-width="0.7">/fir_filter_test/u_fir_filter_test/din_reg2</text>
<g font-size="34" letter-spacing="7.04" fill="#f0f0f0" stroke="#f0f0f0" stroke-width="1.3"><text transform="translate(840.5,1931.5) scale(0.5,1)">00000101</text></g>
<polygon points="88.6,1921.5 104.8,1899.5 104.8,1912.5 98.3,1921.5" fill="#94dcf6"/><polygon points="104.8,1899.5 121.0,1921.5 111.3,1921.5 104.8,1912.5" fill="#1694d6"/><polygon points="121.0,1921.5 104.8,1943.5 104.8,1930.5 111.3,1921.5" fill="#0a6a9c"/><polygon points="104.8,1943.5 88.6,1921.5 98.3,1921.5 104.8,1930.5" fill="#1a8ed2"/><polygon points="98.3,1921.5 104.8,1912.5 111.3,1921.5 104.8,1930.5" fill="#00c6f6"/>
<rect x="79.5" y="1922.4" width="10" height="3.2" fill="#c4c4c4"/>
<rect x="57" y="1909.0" width="22.5" height="30" rx="2" fill="url(#pg)" stroke="#8890a8" stroke-width="1.5"/>
<rect x="63" y="1922.5" width="11.5" height="2.8" fill="#111"/>
<rect x="67.4" y="1917.0" width="2.8" height="14" fill="#111"/>
</g>
<rect x="832" y="251" width="2" height="1788" fill="#7a7a7a"/><rect x="834" y="251" width="3.4" height="1750" fill="#f4f4f4"/>
<rect x="1293.8" y="250" width="2.2" height="1789" fill="#6a6a6a"/><rect x="1296" y="250" width="4" height="1789" fill="#ececec"/><rect x="1300" y="250" width="1.6" height="1789" fill="#383838"/>
</svg>
</body></html>
